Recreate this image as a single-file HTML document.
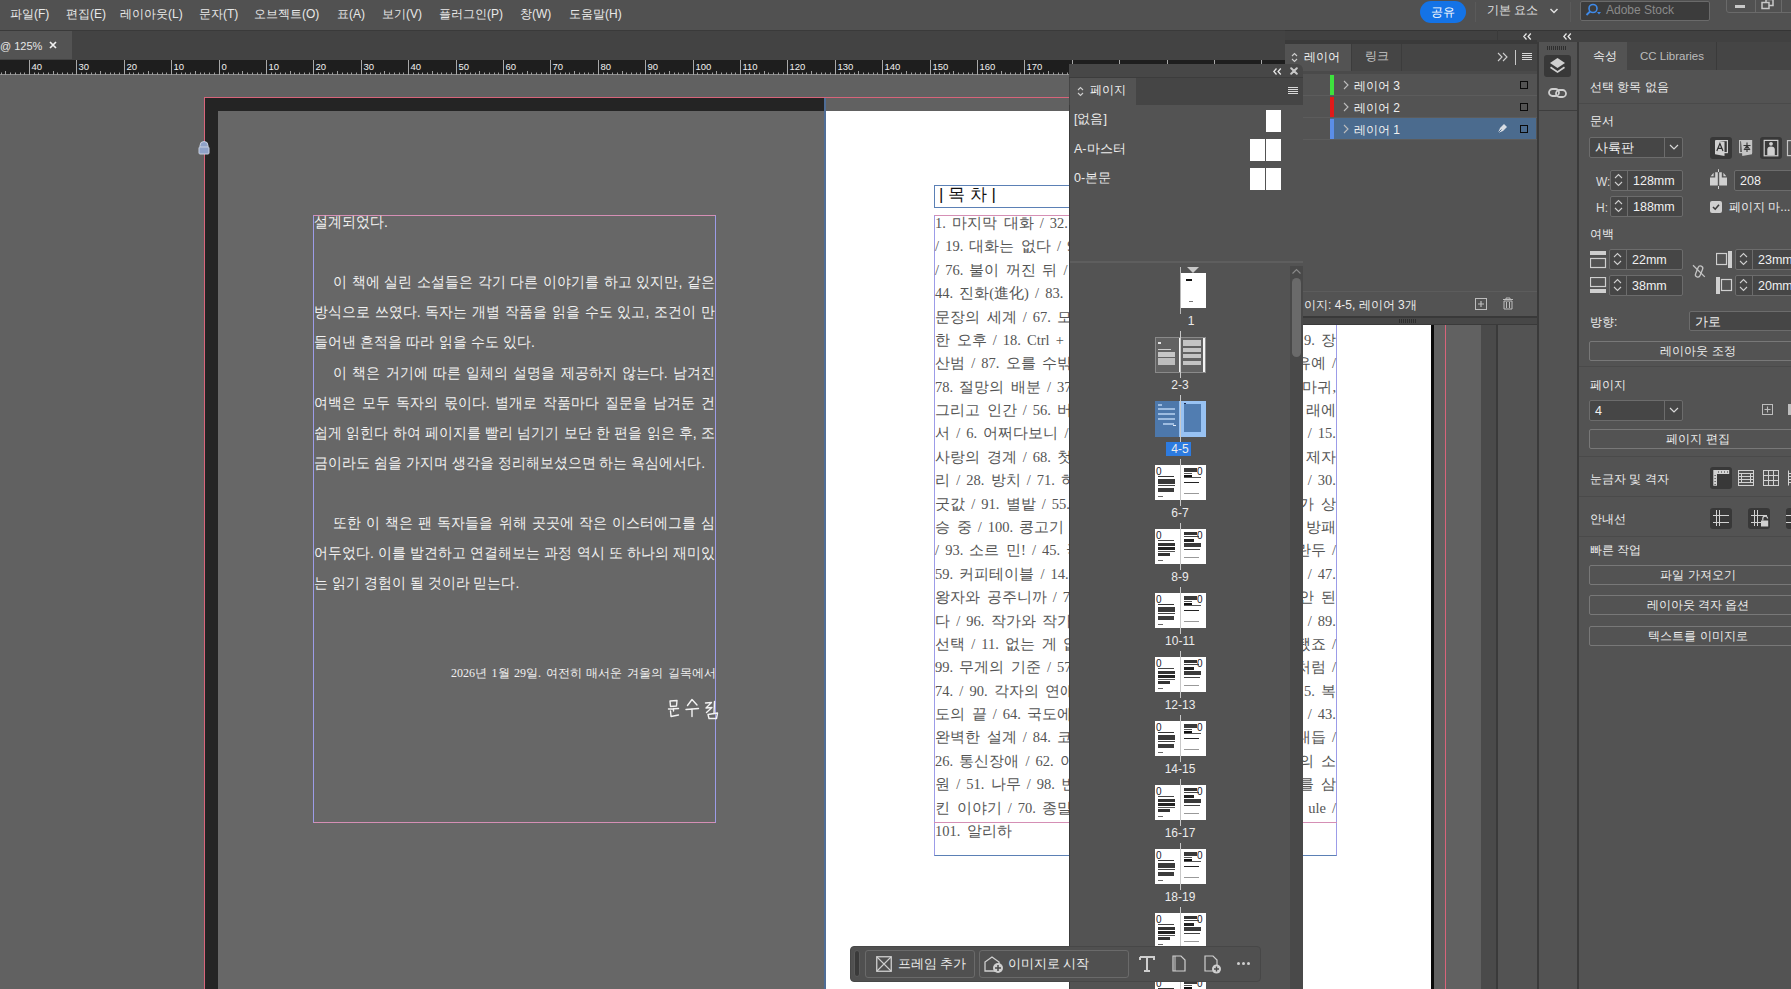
<!DOCTYPE html><html><head><meta charset="utf-8"><style>
html,body{margin:0;padding:0;}
body{width:1791px;height:989px;overflow:hidden;position:relative;background:#535353;font-family:"Liberation Sans", sans-serif;}
div{position:absolute;box-sizing:border-box;}
.t{white-space:nowrap;line-height:1;}
svg{position:absolute;}
.k{font-family:"Liberation Sans", sans-serif;}
</style></head><body>
<div style="left:0px;top:75px;width:1481px;height:914px;background:#616161;"></div>
<div style="left:204px;top:97px;width:1242px;height:900px;border:1px solid #d8647a;border-bottom:none;"></div>
<div style="left:205px;top:98px;width:619px;height:891px;background:#242424;"></div>
<div style="left:218px;top:111px;width:606px;height:878px;background:#676767;"></div>
<div style="left:824px;top:98px;width:2px;height:891px;background:#4f6d96;"></div>
<div style="left:826px;top:111px;width:605px;height:878px;background:#ffffff;"></div>
<div style="left:1431px;top:111px;width:3px;height:878px;background:#0a0a0a;"></div>
<div style="left:1445px;top:97px;width:1px;height:892px;background:#d8647a;"></div>
<div style="left:313px;top:215px;width:403px;height:608px;border-top:1px solid #d58fb5;border-bottom:1px solid #d58fb5;border-left:1px solid #9c9ce8;border-right:1px solid #9c9ce8;"></div>
<div style="left:314px;top:213px;width:70px;height:18px;font-size:14px;color:#f2f2f2;transform:scaleY(1.08);line-height:18px;text-align:justify;text-align-last:justify;white-space:nowrap;overflow:visible;">설계되었다.</div>
<div style="left:333px;top:273px;width:382px;height:18px;font-size:14px;color:#f2f2f2;transform:scaleY(1.08);line-height:18px;text-align:justify;text-align-last:justify;white-space:nowrap;overflow:visible;">이 책에 실린 소설들은 각기 다른 이야기를 하고 있지만, 같은</div>
<div style="left:314px;top:303px;width:401px;height:18px;font-size:14px;color:#f2f2f2;transform:scaleY(1.08);line-height:18px;text-align:justify;text-align-last:justify;white-space:nowrap;overflow:visible;">방식으로 쓰였다. 독자는 개별 작품을 읽을 수도 있고, 조건이 만</div>
<div style="left:314px;top:333px;width:221px;height:18px;font-size:14px;color:#f2f2f2;transform:scaleY(1.08);line-height:18px;text-align:justify;text-align-last:justify;white-space:nowrap;overflow:visible;">들어낸 흔적을 따라 읽을 수도 있다.</div>
<div style="left:333px;top:364px;width:382px;height:18px;font-size:14px;color:#f2f2f2;transform:scaleY(1.08);line-height:18px;text-align:justify;text-align-last:justify;white-space:nowrap;overflow:visible;">이 책은 거기에 따른 일체의 설명을 제공하지 않는다. 남겨진</div>
<div style="left:314px;top:394px;width:401px;height:18px;font-size:14px;color:#f2f2f2;transform:scaleY(1.08);line-height:18px;text-align:justify;text-align-last:justify;white-space:nowrap;overflow:visible;">여백은 모두 독자의 몫이다. 별개로 작품마다 질문을 남겨둔 건</div>
<div style="left:314px;top:424px;width:401px;height:18px;font-size:14px;color:#f2f2f2;transform:scaleY(1.08);line-height:18px;text-align:justify;text-align-last:justify;white-space:nowrap;overflow:visible;">쉽게 읽힌다 하여 페이지를 빨리 넘기기 보단 한 편을 읽은 후, 조</div>
<div style="left:314px;top:454px;width:388px;height:18px;font-size:14px;color:#f2f2f2;transform:scaleY(1.08);line-height:18px;text-align:justify;text-align-last:justify;white-space:nowrap;overflow:visible;">금이라도 쉼을 가지며 생각을 정리해보셨으면 하는 욕심에서다.</div>
<div style="left:333px;top:514px;width:382px;height:18px;font-size:14px;color:#f2f2f2;transform:scaleY(1.08);line-height:18px;text-align:justify;text-align-last:justify;white-space:nowrap;overflow:visible;">또한 이 책은 팬 독자들을 위해 곳곳에 작은 이스터에그를 심</div>
<div style="left:314px;top:544px;width:401px;height:18px;font-size:14px;color:#f2f2f2;transform:scaleY(1.08);line-height:18px;text-align:justify;text-align-last:justify;white-space:nowrap;overflow:visible;">어두었다. 이를 발견하고 연결해보는 과정 역시 또 하나의 재미있</div>
<div style="left:314px;top:574px;width:202px;height:18px;font-size:14px;color:#f2f2f2;transform:scaleY(1.08);line-height:18px;text-align:justify;text-align-last:justify;white-space:nowrap;overflow:visible;">는 읽기 경험이 될 것이라 믿는다.</div>
<div class="t" style="left:451px;top:665px;width:265px;text-align:right;font-family:'Liberation Serif', serif;word-spacing:1.5px;font-size:12px;line-height:16px;color:#f0f0f0;">2026<span class="k">년</span> 1<span class="k">월</span> 29<span class="k">일</span>. <span class="k">여전히 매서운 겨울의 길목에서</span></div>
<svg style="left:660px;top:694px" width="66" height="30" viewBox="660 694 66 30"><g fill="none" stroke="#f2f2f2" stroke-width="1.4" stroke-linecap="round" stroke-linejoin="round"><path d="M670 701 L677 700.5 L676.5 706 L670.5 706.5 Z"/><path d="M668.5 709 L678.5 708.5 M673.5 708.5 V711"/><path d="M670.5 711 L671 716.5 L678.5 715"/><path d="M687.5 705.5 L692 699.5 L697 705"/><path d="M686 709.5 L698.5 708.5 M692 709 V716.5"/><path d="M705.5 703 L711.5 702.5 L706 708 L712 707.5 L706.5 712.5"/><path d="M714.5 701.5 L714 713.5"/><path d="M708 714.5 L717.5 713 L716.5 718.5 L709 718.5 Z"/></g></svg>
<svg style="left:197px;top:141px" width="14" height="14" viewBox="0 0 14 14"><path d="M3 6 V4.5 A4 4 0 0 1 11 4.5 V6" fill="#8fa2c8" stroke="#c8d0e0" stroke-width="1"/><rect x="2" y="6" width="10" height="7" rx="1" fill="#8fa2c8" stroke="#c8d0e0" stroke-width="1"/></svg>
<div style="left:934px;top:185px;width:403px;height:23px;border:1px solid #5b80b5;"></div>
<div class="t" style="left:939px;top:185px;font-size:17px;line-height:20px;color:#111;">| 목 차 |</div>
<div style="left:934px;top:215px;width:403px;height:641px;border-left:1px solid #9c9ce8;border-right:1px solid #9c9ce8;border-top:1px solid #d58fb5;border-bottom:1px solid #5b80b5;"></div>
<div style="left:934px;top:822px;width:403px;height:1px;background:#d58fb5;"></div>
<div class="t" style="left:935px;top:214.0px;font-family:'Liberation Serif', serif;font-size:14.5px;word-spacing:2.5px;color:#555555;line-height:18px;">1. <span class="k">마지막 대화</span> / 32. <span class="k">밤의 무게</span> / 7. <span class="k">그</span></div>
<div class="t" style="left:935px;top:237.4px;font-family:'Liberation Serif', serif;font-size:14.5px;word-spacing:2.5px;color:#555555;line-height:18px;">/ 19. <span class="k">대화는 없다</span> / 9. <span class="k">시간의</span></div>
<div class="t" style="left:935px;top:260.8px;font-family:'Liberation Serif', serif;font-size:14.5px;word-spacing:2.5px;color:#555555;line-height:18px;">/ 76. <span class="k">불이 꺼진 뒤</span> / 24. <span class="k">새벽</span></div>
<div class="t" style="left:935px;top:284.1px;font-family:'Liberation Serif', serif;font-size:14.5px;word-spacing:2.5px;color:#555555;line-height:18px;">44. <span class="k">진화</span>(<span class="k">進化</span>) / 83. <span class="k">잘못된</span></div>
<div class="t" style="left:935px;top:307.5px;font-family:'Liberation Serif', serif;font-size:14.5px;word-spacing:2.5px;color:#555555;line-height:18px;"><span class="k">문장의 세계</span> / 67. <span class="k">모라토리엄</span></div>
<div class="t" style="left:935px;top:330.9px;font-family:'Liberation Serif', serif;font-size:14.5px;word-spacing:2.5px;color:#555555;line-height:18px;"><span class="k">한 오후</span> / 18. Ctrl + Z / 39. <span class="k">장</span></div>
<div class="t" style="left:1136px;top:330.9px;width:200px;text-align:right;font-family:'Liberation Serif', serif;font-size:14.5px;word-spacing:2.5px;color:#555555;line-height:18px;">9. <span class="k">장</span></div>
<div class="t" style="left:935px;top:354.3px;font-family:'Liberation Serif', serif;font-size:14.5px;word-spacing:2.5px;color:#555555;line-height:18px;"><span class="k">산범</span> / 87. <span class="k">오를 수밖에 없는</span></div>
<div class="t" style="left:1136px;top:354.3px;width:200px;text-align:right;font-family:'Liberation Serif', serif;font-size:14.5px;word-spacing:2.5px;color:#555555;line-height:18px;"><span class="k">유예</span> /</div>
<div class="t" style="left:935px;top:377.7px;font-family:'Liberation Serif', serif;font-size:14.5px;word-spacing:2.5px;color:#555555;line-height:18px;">78. <span class="k">절망의 배분</span> / 37. <span class="k">악마귀</span></div>
<div class="t" style="left:1136px;top:377.7px;width:200px;text-align:right;font-family:'Liberation Serif', serif;font-size:14.5px;word-spacing:2.5px;color:#555555;line-height:18px;"><span class="k">마귀</span>,</div>
<div class="t" style="left:935px;top:401.0px;font-family:'Liberation Serif', serif;font-size:14.5px;word-spacing:2.5px;color:#555555;line-height:18px;"><span class="k">그리고 인간</span> / 56. <span class="k">버스 아래에</span></div>
<div class="t" style="left:1136px;top:401.0px;width:200px;text-align:right;font-family:'Liberation Serif', serif;font-size:14.5px;word-spacing:2.5px;color:#555555;line-height:18px;"><span class="k">래에</span></div>
<div class="t" style="left:935px;top:424.4px;font-family:'Liberation Serif', serif;font-size:14.5px;word-spacing:2.5px;color:#555555;line-height:18px;"><span class="k">서</span> / 6. <span class="k">어쩌다보니</span> / 41. 15.</div>
<div class="t" style="left:1136px;top:424.4px;width:200px;text-align:right;font-family:'Liberation Serif', serif;font-size:14.5px;word-spacing:2.5px;color:#555555;line-height:18px;">/ 15.</div>
<div class="t" style="left:935px;top:447.8px;font-family:'Liberation Serif', serif;font-size:14.5px;word-spacing:2.5px;color:#555555;line-height:18px;"><span class="k">사랑의 경계</span> / 68. <span class="k">첫인상 제자</span></div>
<div class="t" style="left:1136px;top:447.8px;width:200px;text-align:right;font-family:'Liberation Serif', serif;font-size:14.5px;word-spacing:2.5px;color:#555555;line-height:18px;"><span class="k">제자</span></div>
<div class="t" style="left:935px;top:471.2px;font-family:'Liberation Serif', serif;font-size:14.5px;word-spacing:2.5px;color:#555555;line-height:18px;"><span class="k">리</span> / 28. <span class="k">방치</span> / 71. <span class="k">허수아비</span> / 30.</div>
<div class="t" style="left:1136px;top:471.2px;width:200px;text-align:right;font-family:'Liberation Serif', serif;font-size:14.5px;word-spacing:2.5px;color:#555555;line-height:18px;">/ 30.</div>
<div class="t" style="left:935px;top:494.6px;font-family:'Liberation Serif', serif;font-size:14.5px;word-spacing:2.5px;color:#555555;line-height:18px;"><span class="k">굿값</span> / 91. <span class="k">별밭</span> / 55. <span class="k">작가 상</span></div>
<div class="t" style="left:1136px;top:494.6px;width:200px;text-align:right;font-family:'Liberation Serif', serif;font-size:14.5px;word-spacing:2.5px;color:#555555;line-height:18px;"><span class="k">가 상</span></div>
<div class="t" style="left:935px;top:517.9px;font-family:'Liberation Serif', serif;font-size:14.5px;word-spacing:2.5px;color:#555555;line-height:18px;"><span class="k">승 중</span> / 100. <span class="k">콩고기</span> / 12. <span class="k">방패</span></div>
<div class="t" style="left:1136px;top:517.9px;width:200px;text-align:right;font-family:'Liberation Serif', serif;font-size:14.5px;word-spacing:2.5px;color:#555555;line-height:18px;"><span class="k">방패</span></div>
<div class="t" style="left:935px;top:541.3px;font-family:'Liberation Serif', serif;font-size:14.5px;word-spacing:2.5px;color:#555555;line-height:18px;">/ 93. <span class="k">소르 민</span>! / 45. <span class="k">국란두</span></div>
<div class="t" style="left:1136px;top:541.3px;width:200px;text-align:right;font-family:'Liberation Serif', serif;font-size:14.5px;word-spacing:2.5px;color:#555555;line-height:18px;"><span class="k">란두</span> /</div>
<div class="t" style="left:935px;top:564.7px;font-family:'Liberation Serif', serif;font-size:14.5px;word-spacing:2.5px;color:#555555;line-height:18px;">59. <span class="k">커피테이블</span> / 14. <span class="k">모래</span> / 47.</div>
<div class="t" style="left:1136px;top:564.7px;width:200px;text-align:right;font-family:'Liberation Serif', serif;font-size:14.5px;word-spacing:2.5px;color:#555555;line-height:18px;">/ 47.</div>
<div class="t" style="left:935px;top:588.1px;font-family:'Liberation Serif', serif;font-size:14.5px;word-spacing:2.5px;color:#555555;line-height:18px;"><span class="k">왕자와 공주니까</span> / 75. <span class="k">안 된</span></div>
<div class="t" style="left:1136px;top:588.1px;width:200px;text-align:right;font-family:'Liberation Serif', serif;font-size:14.5px;word-spacing:2.5px;color:#555555;line-height:18px;"><span class="k">안 된</span></div>
<div class="t" style="left:935px;top:611.5px;font-family:'Liberation Serif', serif;font-size:14.5px;word-spacing:2.5px;color:#555555;line-height:18px;"><span class="k">다</span> / 96. <span class="k">작가와 작가</span> / 89.</div>
<div class="t" style="left:1136px;top:611.5px;width:200px;text-align:right;font-family:'Liberation Serif', serif;font-size:14.5px;word-spacing:2.5px;color:#555555;line-height:18px;">/ 89.</div>
<div class="t" style="left:935px;top:634.8px;font-family:'Liberation Serif', serif;font-size:14.5px;word-spacing:2.5px;color:#555555;line-height:18px;"><span class="k">선택</span> / 11. <span class="k">없는 게 없죠</span></div>
<div class="t" style="left:1136px;top:634.8px;width:200px;text-align:right;font-family:'Liberation Serif', serif;font-size:14.5px;word-spacing:2.5px;color:#555555;line-height:18px;"><span class="k">됐죠</span> /</div>
<div class="t" style="left:935px;top:658.2px;font-family:'Liberation Serif', serif;font-size:14.5px;word-spacing:2.5px;color:#555555;line-height:18px;">99. <span class="k">무게의 기준</span> / 57. <span class="k">처럼</span></div>
<div class="t" style="left:1136px;top:658.2px;width:200px;text-align:right;font-family:'Liberation Serif', serif;font-size:14.5px;word-spacing:2.5px;color:#555555;line-height:18px;"><span class="k">처럼</span> /</div>
<div class="t" style="left:935px;top:681.6px;font-family:'Liberation Serif', serif;font-size:14.5px;word-spacing:2.5px;color:#555555;line-height:18px;">74. / 90. <span class="k">각자의 연애</span> / 35. <span class="k">복</span></div>
<div class="t" style="left:1136px;top:681.6px;width:200px;text-align:right;font-family:'Liberation Serif', serif;font-size:14.5px;word-spacing:2.5px;color:#555555;line-height:18px;">5. <span class="k">복</span></div>
<div class="t" style="left:935px;top:705.0px;font-family:'Liberation Serif', serif;font-size:14.5px;word-spacing:2.5px;color:#555555;line-height:18px;"><span class="k">도의 끝</span> / 64. <span class="k">국도에서</span> / 43.</div>
<div class="t" style="left:1136px;top:705.0px;width:200px;text-align:right;font-family:'Liberation Serif', serif;font-size:14.5px;word-spacing:2.5px;color:#555555;line-height:18px;">/ 43.</div>
<div class="t" style="left:935px;top:728.4px;font-family:'Liberation Serif', serif;font-size:14.5px;word-spacing:2.5px;color:#555555;line-height:18px;"><span class="k">완벽한 설계</span> / 84. <span class="k">코로나 매듭</span></div>
<div class="t" style="left:1136px;top:728.4px;width:200px;text-align:right;font-family:'Liberation Serif', serif;font-size:14.5px;word-spacing:2.5px;color:#555555;line-height:18px;"><span class="k">대듭</span> /</div>
<div class="t" style="left:935px;top:751.7px;font-family:'Liberation Serif', serif;font-size:14.5px;word-spacing:2.5px;color:#555555;line-height:18px;">26. <span class="k">통신장애</span> / 62. <span class="k">아이의 소</span></div>
<div class="t" style="left:1136px;top:751.7px;width:200px;text-align:right;font-family:'Liberation Serif', serif;font-size:14.5px;word-spacing:2.5px;color:#555555;line-height:18px;"><span class="k">의 소</span></div>
<div class="t" style="left:935px;top:775.1px;font-family:'Liberation Serif', serif;font-size:14.5px;word-spacing:2.5px;color:#555555;line-height:18px;"><span class="k">원</span> / 51. <span class="k">나무</span> / 98. <span class="k">변명를 삼</span></div>
<div class="t" style="left:1136px;top:775.1px;width:200px;text-align:right;font-family:'Liberation Serif', serif;font-size:14.5px;word-spacing:2.5px;color:#555555;line-height:18px;"><span class="k">를 삼</span></div>
<div class="t" style="left:935px;top:798.5px;font-family:'Liberation Serif', serif;font-size:14.5px;word-spacing:2.5px;color:#555555;line-height:18px;"><span class="k">킨 이야기</span> / 70. <span class="k">종말의</span> Capsule</div>
<div class="t" style="left:1136px;top:798.5px;width:200px;text-align:right;font-family:'Liberation Serif', serif;font-size:14.5px;word-spacing:2.5px;color:#555555;line-height:18px;">ule /</div>
<div class="t" style="left:935px;top:821.9px;font-family:'Liberation Serif', serif;font-size:14.5px;word-spacing:2.5px;color:#555555;line-height:18px;">101. <span class="k">알리하</span></div>
<div style="left:1481px;top:75px;width:16px;height:914px;background:#4a4a4a;"></div>
<div style="left:1496px;top:75px;width:2px;height:914px;background:#3a3a3a;"></div>
<div style="left:1498px;top:75px;width:39px;height:914px;background:#535353;"></div>
<div style="left:0px;top:0px;width:1791px;height:30px;background:#515151;"></div>
<div class="t" style="left:10px;top:6px;font-size:12px;line-height:16px;color:#e8e8e8;">파일(F)</div>
<div class="t" style="left:66px;top:6px;font-size:12px;line-height:16px;color:#e8e8e8;">편집(E)</div>
<div class="t" style="left:120px;top:6px;font-size:12px;line-height:16px;color:#e8e8e8;">레이아웃(L)</div>
<div class="t" style="left:199px;top:6px;font-size:12px;line-height:16px;color:#e8e8e8;">문자(T)</div>
<div class="t" style="left:254px;top:6px;font-size:12px;line-height:16px;color:#e8e8e8;">오브젝트(O)</div>
<div class="t" style="left:337px;top:6px;font-size:12px;line-height:16px;color:#e8e8e8;">표(A)</div>
<div class="t" style="left:382px;top:6px;font-size:12px;line-height:16px;color:#e8e8e8;">보기(V)</div>
<div class="t" style="left:439px;top:6px;font-size:12px;line-height:16px;color:#e8e8e8;">플러그인(P)</div>
<div class="t" style="left:520px;top:6px;font-size:12px;line-height:16px;color:#e8e8e8;">창(W)</div>
<div class="t" style="left:569px;top:6px;font-size:12px;line-height:16px;color:#e8e8e8;">도움말(H)</div>
<div style="left:1420px;top:1px;width:46px;height:22px;background:#1473e6;border-radius:11px;"></div>
<div class="t" style="left:1431px;top:5px;font-size:12px;line-height:14px;color:#fff;">공유</div>
<div style="left:1475px;top:2px;width:1px;height:20px;background:#5a5a5a;"></div>
<div class="t" style="left:1487px;top:3px;font-size:12px;line-height:14px;color:#e0e0e0;">기본 요소</div>
<svg style="left:1549px;top:7px" width="10" height="8" viewBox="0 0 10 8"><path d="M1.5 2 L5 5.5 L8.5 2" fill="none" stroke="#e0e0e0" stroke-width="1.5"/></svg>
<div style="left:1570px;top:2px;width:1px;height:20px;background:#5a5a5a;"></div>
<div style="left:1580px;top:1px;width:130px;height:20px;background:#3c3c3c;border:1px solid #6a6a6a;border-radius:2px;"></div>
<svg style="left:1585px;top:3px" width="18" height="15" viewBox="0 0 18 15"><circle cx="8" cy="5.5" r="4" fill="none" stroke="#3f8ae8" stroke-width="1.6"/><path d="M5 8.5 L1.5 12" stroke="#3f8ae8" stroke-width="1.8"/><path d="M12 9 L16 9 L14 11.5 Z" fill="#3f8ae8"/></svg>
<div class="t" style="left:1606px;top:4px;font-size:12px;line-height:13px;color:#8a8a8a;">Adobe Stock</div>
<div style="left:1726px;top:-2px;width:70px;height:15px;border:1px solid #6a6a6a;border-radius:0 0 0 3px;"></div>
<div style="left:1755px;top:-2px;width:1px;height:14px;background:#6a6a6a;"></div>
<div style="left:1781px;top:-2px;width:1px;height:14px;background:#6a6a6a;"></div>
<div style="left:1735px;top:5px;width:10px;height:3px;background:#c8c8c8;"></div>
<svg style="left:1761px;top:-1px" width="15" height="11" viewBox="0 0 15 11"><rect x="5" y="0.5" width="7" height="6" fill="none" stroke="#c8c8c8" stroke-width="1.5"/><rect x="1" y="3.5" width="7" height="6" fill="#535353" stroke="#c8c8c8" stroke-width="1.5"/></svg>
<div style="left:0px;top:30px;width:1791px;height:30px;background:#434343;border-top:1px solid #3a3a3a;"></div>
<div style="left:0px;top:31px;width:72px;height:28px;background:#535353;"></div>
<div class="t" style="left:0px;top:39px;font-size:11px;line-height:14px;color:#e6e6e6;">@ 125%</div>
<svg style="left:49px;top:41px" width="8" height="8" viewBox="0 0 8 8"><path d="M1 1 L7 7 M7 1 L1 7" stroke="#f0f0f0" stroke-width="1.7"/></svg>
<svg style="left:0;top:60px" width="1285" height="15" viewBox="0 0 1285 15"><rect x="0" y="0" width="1285" height="15" fill="#1e1e1e"/><rect x="0" y="14" width="1285" height="1" fill="#8c8c8c"/><line x1="1.5" y1="12.5" x2="1.5" y2="15" stroke="#a0a0a0" stroke-width="1"/><line x1="5.5" y1="11" x2="5.5" y2="15" stroke="#a0a0a0" stroke-width="1"/><line x1="10.5" y1="12.5" x2="10.5" y2="15" stroke="#a0a0a0" stroke-width="1"/><line x1="15.5" y1="12.5" x2="15.5" y2="15" stroke="#a0a0a0" stroke-width="1"/><line x1="20.5" y1="12.5" x2="20.5" y2="15" stroke="#a0a0a0" stroke-width="1"/><line x1="24.5" y1="12.5" x2="24.5" y2="15" stroke="#a0a0a0" stroke-width="1"/><line x1="29.5" y1="0" x2="29.5" y2="15" stroke="#a8a8a8" stroke-width="1"/><text x="31.5" y="10" font-family="Liberation Sans" font-size="9.5" fill="#f0f0f0">40</text><line x1="34.5" y1="12.5" x2="34.5" y2="15" stroke="#a0a0a0" stroke-width="1"/><line x1="38.5" y1="12.5" x2="38.5" y2="15" stroke="#a0a0a0" stroke-width="1"/><line x1="43.5" y1="12.5" x2="43.5" y2="15" stroke="#a0a0a0" stroke-width="1"/><line x1="48.5" y1="12.5" x2="48.5" y2="15" stroke="#a0a0a0" stroke-width="1"/><line x1="53.5" y1="11" x2="53.5" y2="15" stroke="#a0a0a0" stroke-width="1"/><line x1="57.5" y1="12.5" x2="57.5" y2="15" stroke="#a0a0a0" stroke-width="1"/><line x1="62.5" y1="12.5" x2="62.5" y2="15" stroke="#a0a0a0" stroke-width="1"/><line x1="67.5" y1="12.5" x2="67.5" y2="15" stroke="#a0a0a0" stroke-width="1"/><line x1="72.5" y1="12.5" x2="72.5" y2="15" stroke="#a0a0a0" stroke-width="1"/><line x1="76.5" y1="0" x2="76.5" y2="15" stroke="#a8a8a8" stroke-width="1"/><text x="78.5" y="10" font-family="Liberation Sans" font-size="9.5" fill="#f0f0f0">30</text><line x1="81.5" y1="12.5" x2="81.5" y2="15" stroke="#a0a0a0" stroke-width="1"/><line x1="86.5" y1="12.5" x2="86.5" y2="15" stroke="#a0a0a0" stroke-width="1"/><line x1="91.5" y1="12.5" x2="91.5" y2="15" stroke="#a0a0a0" stroke-width="1"/><line x1="95.5" y1="12.5" x2="95.5" y2="15" stroke="#a0a0a0" stroke-width="1"/><line x1="100.5" y1="11" x2="100.5" y2="15" stroke="#a0a0a0" stroke-width="1"/><line x1="105.5" y1="12.5" x2="105.5" y2="15" stroke="#a0a0a0" stroke-width="1"/><line x1="110.5" y1="12.5" x2="110.5" y2="15" stroke="#a0a0a0" stroke-width="1"/><line x1="114.5" y1="12.5" x2="114.5" y2="15" stroke="#a0a0a0" stroke-width="1"/><line x1="119.5" y1="12.5" x2="119.5" y2="15" stroke="#a0a0a0" stroke-width="1"/><line x1="124.5" y1="0" x2="124.5" y2="15" stroke="#a8a8a8" stroke-width="1"/><text x="126.5" y="10" font-family="Liberation Sans" font-size="9.5" fill="#f0f0f0">20</text><line x1="129.5" y1="12.5" x2="129.5" y2="15" stroke="#a0a0a0" stroke-width="1"/><line x1="133.5" y1="12.5" x2="133.5" y2="15" stroke="#a0a0a0" stroke-width="1"/><line x1="138.5" y1="12.5" x2="138.5" y2="15" stroke="#a0a0a0" stroke-width="1"/><line x1="143.5" y1="12.5" x2="143.5" y2="15" stroke="#a0a0a0" stroke-width="1"/><line x1="148.5" y1="11" x2="148.5" y2="15" stroke="#a0a0a0" stroke-width="1"/><line x1="152.5" y1="12.5" x2="152.5" y2="15" stroke="#a0a0a0" stroke-width="1"/><line x1="157.5" y1="12.5" x2="157.5" y2="15" stroke="#a0a0a0" stroke-width="1"/><line x1="162.5" y1="12.5" x2="162.5" y2="15" stroke="#a0a0a0" stroke-width="1"/><line x1="166.5" y1="12.5" x2="166.5" y2="15" stroke="#a0a0a0" stroke-width="1"/><line x1="171.5" y1="0" x2="171.5" y2="15" stroke="#a8a8a8" stroke-width="1"/><text x="173.5" y="10" font-family="Liberation Sans" font-size="9.5" fill="#f0f0f0">10</text><line x1="176.5" y1="12.5" x2="176.5" y2="15" stroke="#a0a0a0" stroke-width="1"/><line x1="181.5" y1="12.5" x2="181.5" y2="15" stroke="#a0a0a0" stroke-width="1"/><line x1="185.5" y1="12.5" x2="185.5" y2="15" stroke="#a0a0a0" stroke-width="1"/><line x1="190.5" y1="12.5" x2="190.5" y2="15" stroke="#a0a0a0" stroke-width="1"/><line x1="195.5" y1="11" x2="195.5" y2="15" stroke="#a0a0a0" stroke-width="1"/><line x1="200.5" y1="12.5" x2="200.5" y2="15" stroke="#a0a0a0" stroke-width="1"/><line x1="204.5" y1="12.5" x2="204.5" y2="15" stroke="#a0a0a0" stroke-width="1"/><line x1="209.5" y1="12.5" x2="209.5" y2="15" stroke="#a0a0a0" stroke-width="1"/><line x1="214.5" y1="12.5" x2="214.5" y2="15" stroke="#a0a0a0" stroke-width="1"/><line x1="219.5" y1="0" x2="219.5" y2="15" stroke="#a8a8a8" stroke-width="1"/><text x="221.5" y="10" font-family="Liberation Sans" font-size="9.5" fill="#f0f0f0">0</text><line x1="223.5" y1="12.5" x2="223.5" y2="15" stroke="#a0a0a0" stroke-width="1"/><line x1="228.5" y1="12.5" x2="228.5" y2="15" stroke="#a0a0a0" stroke-width="1"/><line x1="233.5" y1="12.5" x2="233.5" y2="15" stroke="#a0a0a0" stroke-width="1"/><line x1="238.5" y1="12.5" x2="238.5" y2="15" stroke="#a0a0a0" stroke-width="1"/><line x1="242.5" y1="11" x2="242.5" y2="15" stroke="#a0a0a0" stroke-width="1"/><line x1="247.5" y1="12.5" x2="247.5" y2="15" stroke="#a0a0a0" stroke-width="1"/><line x1="252.5" y1="12.5" x2="252.5" y2="15" stroke="#a0a0a0" stroke-width="1"/><line x1="257.5" y1="12.5" x2="257.5" y2="15" stroke="#a0a0a0" stroke-width="1"/><line x1="261.5" y1="12.5" x2="261.5" y2="15" stroke="#a0a0a0" stroke-width="1"/><line x1="266.5" y1="0" x2="266.5" y2="15" stroke="#a8a8a8" stroke-width="1"/><text x="268.5" y="10" font-family="Liberation Sans" font-size="9.5" fill="#f0f0f0">10</text><line x1="271.5" y1="12.5" x2="271.5" y2="15" stroke="#a0a0a0" stroke-width="1"/><line x1="275.5" y1="12.5" x2="275.5" y2="15" stroke="#a0a0a0" stroke-width="1"/><line x1="280.5" y1="12.5" x2="280.5" y2="15" stroke="#a0a0a0" stroke-width="1"/><line x1="285.5" y1="12.5" x2="285.5" y2="15" stroke="#a0a0a0" stroke-width="1"/><line x1="290.5" y1="11" x2="290.5" y2="15" stroke="#a0a0a0" stroke-width="1"/><line x1="294.5" y1="12.5" x2="294.5" y2="15" stroke="#a0a0a0" stroke-width="1"/><line x1="299.5" y1="12.5" x2="299.5" y2="15" stroke="#a0a0a0" stroke-width="1"/><line x1="304.5" y1="12.5" x2="304.5" y2="15" stroke="#a0a0a0" stroke-width="1"/><line x1="309.5" y1="12.5" x2="309.5" y2="15" stroke="#a0a0a0" stroke-width="1"/><line x1="313.5" y1="0" x2="313.5" y2="15" stroke="#a8a8a8" stroke-width="1"/><text x="315.5" y="10" font-family="Liberation Sans" font-size="9.5" fill="#f0f0f0">20</text><line x1="318.5" y1="12.5" x2="318.5" y2="15" stroke="#a0a0a0" stroke-width="1"/><line x1="323.5" y1="12.5" x2="323.5" y2="15" stroke="#a0a0a0" stroke-width="1"/><line x1="328.5" y1="12.5" x2="328.5" y2="15" stroke="#a0a0a0" stroke-width="1"/><line x1="332.5" y1="12.5" x2="332.5" y2="15" stroke="#a0a0a0" stroke-width="1"/><line x1="337.5" y1="11" x2="337.5" y2="15" stroke="#a0a0a0" stroke-width="1"/><line x1="342.5" y1="12.5" x2="342.5" y2="15" stroke="#a0a0a0" stroke-width="1"/><line x1="347.5" y1="12.5" x2="347.5" y2="15" stroke="#a0a0a0" stroke-width="1"/><line x1="351.5" y1="12.5" x2="351.5" y2="15" stroke="#a0a0a0" stroke-width="1"/><line x1="356.5" y1="12.5" x2="356.5" y2="15" stroke="#a0a0a0" stroke-width="1"/><line x1="361.5" y1="0" x2="361.5" y2="15" stroke="#a8a8a8" stroke-width="1"/><text x="363.5" y="10" font-family="Liberation Sans" font-size="9.5" fill="#f0f0f0">30</text><line x1="366.5" y1="12.5" x2="366.5" y2="15" stroke="#a0a0a0" stroke-width="1"/><line x1="370.5" y1="12.5" x2="370.5" y2="15" stroke="#a0a0a0" stroke-width="1"/><line x1="375.5" y1="12.5" x2="375.5" y2="15" stroke="#a0a0a0" stroke-width="1"/><line x1="380.5" y1="12.5" x2="380.5" y2="15" stroke="#a0a0a0" stroke-width="1"/><line x1="384.5" y1="11" x2="384.5" y2="15" stroke="#a0a0a0" stroke-width="1"/><line x1="389.5" y1="12.5" x2="389.5" y2="15" stroke="#a0a0a0" stroke-width="1"/><line x1="394.5" y1="12.5" x2="394.5" y2="15" stroke="#a0a0a0" stroke-width="1"/><line x1="399.5" y1="12.5" x2="399.5" y2="15" stroke="#a0a0a0" stroke-width="1"/><line x1="403.5" y1="12.5" x2="403.5" y2="15" stroke="#a0a0a0" stroke-width="1"/><line x1="408.5" y1="0" x2="408.5" y2="15" stroke="#a8a8a8" stroke-width="1"/><text x="410.5" y="10" font-family="Liberation Sans" font-size="9.5" fill="#f0f0f0">40</text><line x1="413.5" y1="12.5" x2="413.5" y2="15" stroke="#a0a0a0" stroke-width="1"/><line x1="418.5" y1="12.5" x2="418.5" y2="15" stroke="#a0a0a0" stroke-width="1"/><line x1="422.5" y1="12.5" x2="422.5" y2="15" stroke="#a0a0a0" stroke-width="1"/><line x1="427.5" y1="12.5" x2="427.5" y2="15" stroke="#a0a0a0" stroke-width="1"/><line x1="432.5" y1="11" x2="432.5" y2="15" stroke="#a0a0a0" stroke-width="1"/><line x1="437.5" y1="12.5" x2="437.5" y2="15" stroke="#a0a0a0" stroke-width="1"/><line x1="441.5" y1="12.5" x2="441.5" y2="15" stroke="#a0a0a0" stroke-width="1"/><line x1="446.5" y1="12.5" x2="446.5" y2="15" stroke="#a0a0a0" stroke-width="1"/><line x1="451.5" y1="12.5" x2="451.5" y2="15" stroke="#a0a0a0" stroke-width="1"/><line x1="456.5" y1="0" x2="456.5" y2="15" stroke="#a8a8a8" stroke-width="1"/><text x="458.5" y="10" font-family="Liberation Sans" font-size="9.5" fill="#f0f0f0">50</text><line x1="460.5" y1="12.5" x2="460.5" y2="15" stroke="#a0a0a0" stroke-width="1"/><line x1="465.5" y1="12.5" x2="465.5" y2="15" stroke="#a0a0a0" stroke-width="1"/><line x1="470.5" y1="12.5" x2="470.5" y2="15" stroke="#a0a0a0" stroke-width="1"/><line x1="475.5" y1="12.5" x2="475.5" y2="15" stroke="#a0a0a0" stroke-width="1"/><line x1="479.5" y1="11" x2="479.5" y2="15" stroke="#a0a0a0" stroke-width="1"/><line x1="484.5" y1="12.5" x2="484.5" y2="15" stroke="#a0a0a0" stroke-width="1"/><line x1="489.5" y1="12.5" x2="489.5" y2="15" stroke="#a0a0a0" stroke-width="1"/><line x1="494.5" y1="12.5" x2="494.5" y2="15" stroke="#a0a0a0" stroke-width="1"/><line x1="498.5" y1="12.5" x2="498.5" y2="15" stroke="#a0a0a0" stroke-width="1"/><line x1="503.5" y1="0" x2="503.5" y2="15" stroke="#a8a8a8" stroke-width="1"/><text x="505.5" y="10" font-family="Liberation Sans" font-size="9.5" fill="#f0f0f0">60</text><line x1="508.5" y1="12.5" x2="508.5" y2="15" stroke="#a0a0a0" stroke-width="1"/><line x1="512.5" y1="12.5" x2="512.5" y2="15" stroke="#a0a0a0" stroke-width="1"/><line x1="517.5" y1="12.5" x2="517.5" y2="15" stroke="#a0a0a0" stroke-width="1"/><line x1="522.5" y1="12.5" x2="522.5" y2="15" stroke="#a0a0a0" stroke-width="1"/><line x1="527.5" y1="11" x2="527.5" y2="15" stroke="#a0a0a0" stroke-width="1"/><line x1="531.5" y1="12.5" x2="531.5" y2="15" stroke="#a0a0a0" stroke-width="1"/><line x1="536.5" y1="12.5" x2="536.5" y2="15" stroke="#a0a0a0" stroke-width="1"/><line x1="541.5" y1="12.5" x2="541.5" y2="15" stroke="#a0a0a0" stroke-width="1"/><line x1="546.5" y1="12.5" x2="546.5" y2="15" stroke="#a0a0a0" stroke-width="1"/><line x1="550.5" y1="0" x2="550.5" y2="15" stroke="#a8a8a8" stroke-width="1"/><text x="552.5" y="10" font-family="Liberation Sans" font-size="9.5" fill="#f0f0f0">70</text><line x1="555.5" y1="12.5" x2="555.5" y2="15" stroke="#a0a0a0" stroke-width="1"/><line x1="560.5" y1="12.5" x2="560.5" y2="15" stroke="#a0a0a0" stroke-width="1"/><line x1="565.5" y1="12.5" x2="565.5" y2="15" stroke="#a0a0a0" stroke-width="1"/><line x1="569.5" y1="12.5" x2="569.5" y2="15" stroke="#a0a0a0" stroke-width="1"/><line x1="574.5" y1="11" x2="574.5" y2="15" stroke="#a0a0a0" stroke-width="1"/><line x1="579.5" y1="12.5" x2="579.5" y2="15" stroke="#a0a0a0" stroke-width="1"/><line x1="584.5" y1="12.5" x2="584.5" y2="15" stroke="#a0a0a0" stroke-width="1"/><line x1="588.5" y1="12.5" x2="588.5" y2="15" stroke="#a0a0a0" stroke-width="1"/><line x1="593.5" y1="12.5" x2="593.5" y2="15" stroke="#a0a0a0" stroke-width="1"/><line x1="598.5" y1="0" x2="598.5" y2="15" stroke="#a8a8a8" stroke-width="1"/><text x="600.5" y="10" font-family="Liberation Sans" font-size="9.5" fill="#f0f0f0">80</text><line x1="603.5" y1="12.5" x2="603.5" y2="15" stroke="#a0a0a0" stroke-width="1"/><line x1="607.5" y1="12.5" x2="607.5" y2="15" stroke="#a0a0a0" stroke-width="1"/><line x1="612.5" y1="12.5" x2="612.5" y2="15" stroke="#a0a0a0" stroke-width="1"/><line x1="617.5" y1="12.5" x2="617.5" y2="15" stroke="#a0a0a0" stroke-width="1"/><line x1="622.5" y1="11" x2="622.5" y2="15" stroke="#a0a0a0" stroke-width="1"/><line x1="626.5" y1="12.5" x2="626.5" y2="15" stroke="#a0a0a0" stroke-width="1"/><line x1="631.5" y1="12.5" x2="631.5" y2="15" stroke="#a0a0a0" stroke-width="1"/><line x1="636.5" y1="12.5" x2="636.5" y2="15" stroke="#a0a0a0" stroke-width="1"/><line x1="640.5" y1="12.5" x2="640.5" y2="15" stroke="#a0a0a0" stroke-width="1"/><line x1="645.5" y1="0" x2="645.5" y2="15" stroke="#a8a8a8" stroke-width="1"/><text x="647.5" y="10" font-family="Liberation Sans" font-size="9.5" fill="#f0f0f0">90</text><line x1="650.5" y1="12.5" x2="650.5" y2="15" stroke="#a0a0a0" stroke-width="1"/><line x1="655.5" y1="12.5" x2="655.5" y2="15" stroke="#a0a0a0" stroke-width="1"/><line x1="659.5" y1="12.5" x2="659.5" y2="15" stroke="#a0a0a0" stroke-width="1"/><line x1="664.5" y1="12.5" x2="664.5" y2="15" stroke="#a0a0a0" stroke-width="1"/><line x1="669.5" y1="11" x2="669.5" y2="15" stroke="#a0a0a0" stroke-width="1"/><line x1="674.5" y1="12.5" x2="674.5" y2="15" stroke="#a0a0a0" stroke-width="1"/><line x1="678.5" y1="12.5" x2="678.5" y2="15" stroke="#a0a0a0" stroke-width="1"/><line x1="683.5" y1="12.5" x2="683.5" y2="15" stroke="#a0a0a0" stroke-width="1"/><line x1="688.5" y1="12.5" x2="688.5" y2="15" stroke="#a0a0a0" stroke-width="1"/><line x1="693.5" y1="0" x2="693.5" y2="15" stroke="#a8a8a8" stroke-width="1"/><text x="695.5" y="10" font-family="Liberation Sans" font-size="9.5" fill="#f0f0f0">100</text><line x1="697.5" y1="12.5" x2="697.5" y2="15" stroke="#a0a0a0" stroke-width="1"/><line x1="702.5" y1="12.5" x2="702.5" y2="15" stroke="#a0a0a0" stroke-width="1"/><line x1="707.5" y1="12.5" x2="707.5" y2="15" stroke="#a0a0a0" stroke-width="1"/><line x1="712.5" y1="12.5" x2="712.5" y2="15" stroke="#a0a0a0" stroke-width="1"/><line x1="716.5" y1="11" x2="716.5" y2="15" stroke="#a0a0a0" stroke-width="1"/><line x1="721.5" y1="12.5" x2="721.5" y2="15" stroke="#a0a0a0" stroke-width="1"/><line x1="726.5" y1="12.5" x2="726.5" y2="15" stroke="#a0a0a0" stroke-width="1"/><line x1="731.5" y1="12.5" x2="731.5" y2="15" stroke="#a0a0a0" stroke-width="1"/><line x1="735.5" y1="12.5" x2="735.5" y2="15" stroke="#a0a0a0" stroke-width="1"/><line x1="740.5" y1="0" x2="740.5" y2="15" stroke="#a8a8a8" stroke-width="1"/><text x="742.5" y="10" font-family="Liberation Sans" font-size="9.5" fill="#f0f0f0">110</text><line x1="745.5" y1="12.5" x2="745.5" y2="15" stroke="#a0a0a0" stroke-width="1"/><line x1="749.5" y1="12.5" x2="749.5" y2="15" stroke="#a0a0a0" stroke-width="1"/><line x1="754.5" y1="12.5" x2="754.5" y2="15" stroke="#a0a0a0" stroke-width="1"/><line x1="759.5" y1="12.5" x2="759.5" y2="15" stroke="#a0a0a0" stroke-width="1"/><line x1="764.5" y1="11" x2="764.5" y2="15" stroke="#a0a0a0" stroke-width="1"/><line x1="768.5" y1="12.5" x2="768.5" y2="15" stroke="#a0a0a0" stroke-width="1"/><line x1="773.5" y1="12.5" x2="773.5" y2="15" stroke="#a0a0a0" stroke-width="1"/><line x1="778.5" y1="12.5" x2="778.5" y2="15" stroke="#a0a0a0" stroke-width="1"/><line x1="783.5" y1="12.5" x2="783.5" y2="15" stroke="#a0a0a0" stroke-width="1"/><line x1="787.5" y1="0" x2="787.5" y2="15" stroke="#a8a8a8" stroke-width="1"/><text x="789.5" y="10" font-family="Liberation Sans" font-size="9.5" fill="#f0f0f0">120</text><line x1="792.5" y1="12.5" x2="792.5" y2="15" stroke="#a0a0a0" stroke-width="1"/><line x1="797.5" y1="12.5" x2="797.5" y2="15" stroke="#a0a0a0" stroke-width="1"/><line x1="802.5" y1="12.5" x2="802.5" y2="15" stroke="#a0a0a0" stroke-width="1"/><line x1="806.5" y1="12.5" x2="806.5" y2="15" stroke="#a0a0a0" stroke-width="1"/><line x1="811.5" y1="11" x2="811.5" y2="15" stroke="#a0a0a0" stroke-width="1"/><line x1="816.5" y1="12.5" x2="816.5" y2="15" stroke="#a0a0a0" stroke-width="1"/><line x1="821.5" y1="12.5" x2="821.5" y2="15" stroke="#a0a0a0" stroke-width="1"/><line x1="825.5" y1="12.5" x2="825.5" y2="15" stroke="#a0a0a0" stroke-width="1"/><line x1="830.5" y1="12.5" x2="830.5" y2="15" stroke="#a0a0a0" stroke-width="1"/><line x1="835.5" y1="0" x2="835.5" y2="15" stroke="#a8a8a8" stroke-width="1"/><text x="837.5" y="10" font-family="Liberation Sans" font-size="9.5" fill="#f0f0f0">130</text><line x1="840.5" y1="12.5" x2="840.5" y2="15" stroke="#a0a0a0" stroke-width="1"/><line x1="844.5" y1="12.5" x2="844.5" y2="15" stroke="#a0a0a0" stroke-width="1"/><line x1="849.5" y1="12.5" x2="849.5" y2="15" stroke="#a0a0a0" stroke-width="1"/><line x1="854.5" y1="12.5" x2="854.5" y2="15" stroke="#a0a0a0" stroke-width="1"/><line x1="858.5" y1="11" x2="858.5" y2="15" stroke="#a0a0a0" stroke-width="1"/><line x1="863.5" y1="12.5" x2="863.5" y2="15" stroke="#a0a0a0" stroke-width="1"/><line x1="868.5" y1="12.5" x2="868.5" y2="15" stroke="#a0a0a0" stroke-width="1"/><line x1="873.5" y1="12.5" x2="873.5" y2="15" stroke="#a0a0a0" stroke-width="1"/><line x1="877.5" y1="12.5" x2="877.5" y2="15" stroke="#a0a0a0" stroke-width="1"/><line x1="882.5" y1="0" x2="882.5" y2="15" stroke="#a8a8a8" stroke-width="1"/><text x="884.5" y="10" font-family="Liberation Sans" font-size="9.5" fill="#f0f0f0">140</text><line x1="887.5" y1="12.5" x2="887.5" y2="15" stroke="#a0a0a0" stroke-width="1"/><line x1="892.5" y1="12.5" x2="892.5" y2="15" stroke="#a0a0a0" stroke-width="1"/><line x1="896.5" y1="12.5" x2="896.5" y2="15" stroke="#a0a0a0" stroke-width="1"/><line x1="901.5" y1="12.5" x2="901.5" y2="15" stroke="#a0a0a0" stroke-width="1"/><line x1="906.5" y1="11" x2="906.5" y2="15" stroke="#a0a0a0" stroke-width="1"/><line x1="911.5" y1="12.5" x2="911.5" y2="15" stroke="#a0a0a0" stroke-width="1"/><line x1="915.5" y1="12.5" x2="915.5" y2="15" stroke="#a0a0a0" stroke-width="1"/><line x1="920.5" y1="12.5" x2="920.5" y2="15" stroke="#a0a0a0" stroke-width="1"/><line x1="925.5" y1="12.5" x2="925.5" y2="15" stroke="#a0a0a0" stroke-width="1"/><line x1="930.5" y1="0" x2="930.5" y2="15" stroke="#a8a8a8" stroke-width="1"/><text x="932.5" y="10" font-family="Liberation Sans" font-size="9.5" fill="#f0f0f0">150</text><line x1="934.5" y1="12.5" x2="934.5" y2="15" stroke="#a0a0a0" stroke-width="1"/><line x1="939.5" y1="12.5" x2="939.5" y2="15" stroke="#a0a0a0" stroke-width="1"/><line x1="944.5" y1="12.5" x2="944.5" y2="15" stroke="#a0a0a0" stroke-width="1"/><line x1="949.5" y1="12.5" x2="949.5" y2="15" stroke="#a0a0a0" stroke-width="1"/><line x1="953.5" y1="11" x2="953.5" y2="15" stroke="#a0a0a0" stroke-width="1"/><line x1="958.5" y1="12.5" x2="958.5" y2="15" stroke="#a0a0a0" stroke-width="1"/><line x1="963.5" y1="12.5" x2="963.5" y2="15" stroke="#a0a0a0" stroke-width="1"/><line x1="968.5" y1="12.5" x2="968.5" y2="15" stroke="#a0a0a0" stroke-width="1"/><line x1="972.5" y1="12.5" x2="972.5" y2="15" stroke="#a0a0a0" stroke-width="1"/><line x1="977.5" y1="0" x2="977.5" y2="15" stroke="#a8a8a8" stroke-width="1"/><text x="979.5" y="10" font-family="Liberation Sans" font-size="9.5" fill="#f0f0f0">160</text><line x1="982.5" y1="12.5" x2="982.5" y2="15" stroke="#a0a0a0" stroke-width="1"/><line x1="986.5" y1="12.5" x2="986.5" y2="15" stroke="#a0a0a0" stroke-width="1"/><line x1="991.5" y1="12.5" x2="991.5" y2="15" stroke="#a0a0a0" stroke-width="1"/><line x1="996.5" y1="12.5" x2="996.5" y2="15" stroke="#a0a0a0" stroke-width="1"/><line x1="1001.5" y1="11" x2="1001.5" y2="15" stroke="#a0a0a0" stroke-width="1"/><line x1="1005.5" y1="12.5" x2="1005.5" y2="15" stroke="#a0a0a0" stroke-width="1"/><line x1="1010.5" y1="12.5" x2="1010.5" y2="15" stroke="#a0a0a0" stroke-width="1"/><line x1="1015.5" y1="12.5" x2="1015.5" y2="15" stroke="#a0a0a0" stroke-width="1"/><line x1="1020.5" y1="12.5" x2="1020.5" y2="15" stroke="#a0a0a0" stroke-width="1"/><line x1="1024.5" y1="0" x2="1024.5" y2="15" stroke="#a8a8a8" stroke-width="1"/><text x="1026.5" y="10" font-family="Liberation Sans" font-size="9.5" fill="#f0f0f0">170</text><line x1="1029.5" y1="12.5" x2="1029.5" y2="15" stroke="#a0a0a0" stroke-width="1"/><line x1="1034.5" y1="12.5" x2="1034.5" y2="15" stroke="#a0a0a0" stroke-width="1"/><line x1="1039.5" y1="12.5" x2="1039.5" y2="15" stroke="#a0a0a0" stroke-width="1"/><line x1="1043.5" y1="12.5" x2="1043.5" y2="15" stroke="#a0a0a0" stroke-width="1"/><line x1="1048.5" y1="11" x2="1048.5" y2="15" stroke="#a0a0a0" stroke-width="1"/><line x1="1053.5" y1="12.5" x2="1053.5" y2="15" stroke="#a0a0a0" stroke-width="1"/><line x1="1058.5" y1="12.5" x2="1058.5" y2="15" stroke="#a0a0a0" stroke-width="1"/><line x1="1062.5" y1="12.5" x2="1062.5" y2="15" stroke="#a0a0a0" stroke-width="1"/><line x1="1067.5" y1="12.5" x2="1067.5" y2="15" stroke="#a0a0a0" stroke-width="1"/><line x1="1072.5" y1="0" x2="1072.5" y2="15" stroke="#a8a8a8" stroke-width="1"/><text x="1074.5" y="10" font-family="Liberation Sans" font-size="9.5" fill="#f0f0f0">180</text><line x1="1077.5" y1="12.5" x2="1077.5" y2="15" stroke="#a0a0a0" stroke-width="1"/><line x1="1081.5" y1="12.5" x2="1081.5" y2="15" stroke="#a0a0a0" stroke-width="1"/><line x1="1086.5" y1="12.5" x2="1086.5" y2="15" stroke="#a0a0a0" stroke-width="1"/><line x1="1091.5" y1="12.5" x2="1091.5" y2="15" stroke="#a0a0a0" stroke-width="1"/><line x1="1096.5" y1="11" x2="1096.5" y2="15" stroke="#a0a0a0" stroke-width="1"/><line x1="1100.5" y1="12.5" x2="1100.5" y2="15" stroke="#a0a0a0" stroke-width="1"/><line x1="1105.5" y1="12.5" x2="1105.5" y2="15" stroke="#a0a0a0" stroke-width="1"/><line x1="1110.5" y1="12.5" x2="1110.5" y2="15" stroke="#a0a0a0" stroke-width="1"/><line x1="1114.5" y1="12.5" x2="1114.5" y2="15" stroke="#a0a0a0" stroke-width="1"/><line x1="1119.5" y1="0" x2="1119.5" y2="15" stroke="#a8a8a8" stroke-width="1"/><text x="1121.5" y="10" font-family="Liberation Sans" font-size="9.5" fill="#f0f0f0">190</text><line x1="1124.5" y1="12.5" x2="1124.5" y2="15" stroke="#a0a0a0" stroke-width="1"/><line x1="1129.5" y1="12.5" x2="1129.5" y2="15" stroke="#a0a0a0" stroke-width="1"/><line x1="1133.5" y1="12.5" x2="1133.5" y2="15" stroke="#a0a0a0" stroke-width="1"/><line x1="1138.5" y1="12.5" x2="1138.5" y2="15" stroke="#a0a0a0" stroke-width="1"/><line x1="1143.5" y1="11" x2="1143.5" y2="15" stroke="#a0a0a0" stroke-width="1"/><line x1="1148.5" y1="12.5" x2="1148.5" y2="15" stroke="#a0a0a0" stroke-width="1"/><line x1="1152.5" y1="12.5" x2="1152.5" y2="15" stroke="#a0a0a0" stroke-width="1"/><line x1="1157.5" y1="12.5" x2="1157.5" y2="15" stroke="#a0a0a0" stroke-width="1"/><line x1="1162.5" y1="12.5" x2="1162.5" y2="15" stroke="#a0a0a0" stroke-width="1"/><line x1="1167.5" y1="0" x2="1167.5" y2="15" stroke="#a8a8a8" stroke-width="1"/><text x="1169.5" y="10" font-family="Liberation Sans" font-size="9.5" fill="#f0f0f0">200</text><line x1="1171.5" y1="12.5" x2="1171.5" y2="15" stroke="#a0a0a0" stroke-width="1"/><line x1="1176.5" y1="12.5" x2="1176.5" y2="15" stroke="#a0a0a0" stroke-width="1"/><line x1="1181.5" y1="12.5" x2="1181.5" y2="15" stroke="#a0a0a0" stroke-width="1"/><line x1="1186.5" y1="12.5" x2="1186.5" y2="15" stroke="#a0a0a0" stroke-width="1"/><line x1="1190.5" y1="11" x2="1190.5" y2="15" stroke="#a0a0a0" stroke-width="1"/><line x1="1195.5" y1="12.5" x2="1195.5" y2="15" stroke="#a0a0a0" stroke-width="1"/><line x1="1200.5" y1="12.5" x2="1200.5" y2="15" stroke="#a0a0a0" stroke-width="1"/><line x1="1205.5" y1="12.5" x2="1205.5" y2="15" stroke="#a0a0a0" stroke-width="1"/><line x1="1209.5" y1="12.5" x2="1209.5" y2="15" stroke="#a0a0a0" stroke-width="1"/><line x1="1214.5" y1="0" x2="1214.5" y2="15" stroke="#a8a8a8" stroke-width="1"/><text x="1216.5" y="10" font-family="Liberation Sans" font-size="9.5" fill="#f0f0f0">210</text><line x1="1219.5" y1="12.5" x2="1219.5" y2="15" stroke="#a0a0a0" stroke-width="1"/><line x1="1223.5" y1="12.5" x2="1223.5" y2="15" stroke="#a0a0a0" stroke-width="1"/><line x1="1228.5" y1="12.5" x2="1228.5" y2="15" stroke="#a0a0a0" stroke-width="1"/><line x1="1233.5" y1="12.5" x2="1233.5" y2="15" stroke="#a0a0a0" stroke-width="1"/><line x1="1238.5" y1="11" x2="1238.5" y2="15" stroke="#a0a0a0" stroke-width="1"/><line x1="1242.5" y1="12.5" x2="1242.5" y2="15" stroke="#a0a0a0" stroke-width="1"/><line x1="1247.5" y1="12.5" x2="1247.5" y2="15" stroke="#a0a0a0" stroke-width="1"/><line x1="1252.5" y1="12.5" x2="1252.5" y2="15" stroke="#a0a0a0" stroke-width="1"/><line x1="1257.5" y1="12.5" x2="1257.5" y2="15" stroke="#a0a0a0" stroke-width="1"/><line x1="1261.5" y1="0" x2="1261.5" y2="15" stroke="#a8a8a8" stroke-width="1"/><text x="1263.5" y="10" font-family="Liberation Sans" font-size="9.5" fill="#f0f0f0">220</text><line x1="1266.5" y1="12.5" x2="1266.5" y2="15" stroke="#a0a0a0" stroke-width="1"/><line x1="1271.5" y1="12.5" x2="1271.5" y2="15" stroke="#a0a0a0" stroke-width="1"/><line x1="1276.5" y1="12.5" x2="1276.5" y2="15" stroke="#a0a0a0" stroke-width="1"/><line x1="1280.5" y1="12.5" x2="1280.5" y2="15" stroke="#a0a0a0" stroke-width="1"/></svg>
<div style="left:1285px;top:30px;width:506px;height:12px;background:#414141;border-top:1px solid #353535;"></div>
<div style="left:1497px;top:30px;width:1px;height:12px;background:#3a3a3a;"></div>
<svg style="left:1523px;top:33px" width="9" height="7" viewBox="0 0 9 7"><path d="M3.5 0.5 L0.8 3.5 L3.5 6.5 M7.8 0.5 L5.1 3.5 L7.8 6.5" fill="none" stroke="#e6e6e6" stroke-width="1.3"/></svg>
<svg style="left:1563px;top:33px" width="9" height="7" viewBox="0 0 9 7"><path d="M3.5 0.5 L0.8 3.5 L3.5 6.5 M7.8 0.5 L5.1 3.5 L7.8 6.5" fill="none" stroke="#e6e6e6" stroke-width="1.3"/></svg>
<div style="left:1285px;top:40px;width:252px;height:285px;background:#535353;"></div>
<div style="left:1285px;top:40px;width:252px;height:4px;background:#3a3a3a;"></div>
<div style="left:1285px;top:44px;width:252px;height:27px;background:#454545;"></div>
<div style="left:1285px;top:44px;width:66px;height:27px;background:#535353;"></div>
<svg style="left:1291px;top:52px" width="7" height="11" viewBox="0 0 7 11"><path d="M1 4 L3.5 1.5 L6 4 M1 7 L3.5 9.5 L6 7" fill="none" stroke="#cfcfcf" stroke-width="1.1"/></svg>
<div class="t" style="left:1304px;top:50px;font-size:12px;line-height:15px;color:#f0f0f0;">레이어</div>
<div style="left:1351px;top:44px;width:1px;height:27px;background:#3c3c3c;"></div>
<div class="t" style="left:1365px;top:49px;font-size:12px;line-height:15px;color:#c8c8c8;">링크</div>
<div style="left:1401px;top:44px;width:1px;height:27px;background:#3c3c3c;"></div>
<svg style="left:1497px;top:51px" width="14" height="12" viewBox="0 0 14 12"><path d="M1 2 L5 6 L1 10 M6 2 L10 6 L6 10" fill="none" stroke="#d0d0d0" stroke-width="1.1"/></svg>
<div style="left:1515px;top:50px;width:1px;height:15px;background:#c8c8c8;"></div>
<div style="left:1522px;top:53px;width:10px;height:1px;background:#d8d8d8;"></div>
<div style="left:1522px;top:55px;width:10px;height:1px;background:#d8d8d8;"></div>
<div style="left:1522px;top:57px;width:10px;height:1px;background:#d8d8d8;"></div>
<div style="left:1522px;top:59px;width:10px;height:1px;background:#d8d8d8;"></div>
<div style="left:1285px;top:71px;width:252px;height:3px;background:#4a4a4a;"></div>
<div style="left:1285px;top:95px;width:252px;height:1px;background:#5c5c5c;"></div>
<div style="left:1330px;top:75px;width:4px;height:20px;background:#3ee23e;"></div>
<svg style="left:1343px;top:80px" width="6" height="10" viewBox="0 0 6 10"><path d="M1 1 L5 5 L1 9" fill="none" stroke="#bdbdbd" stroke-width="1.1"/></svg>
<div class="t" style="left:1354px;top:79px;font-size:12px;line-height:14px;color:#f0f0f0;">레이어 3</div>
<div style="left:1520px;top:81px;width:8px;height:8px;border:1.6px solid #0a0a0a;"></div>
<div style="left:1285px;top:117px;width:252px;height:1px;background:#5c5c5c;"></div>
<div style="left:1330px;top:97px;width:4px;height:20px;background:#e01a1a;"></div>
<svg style="left:1343px;top:102px" width="6" height="10" viewBox="0 0 6 10"><path d="M1 1 L5 5 L1 9" fill="none" stroke="#bdbdbd" stroke-width="1.1"/></svg>
<div class="t" style="left:1354px;top:101px;font-size:12px;line-height:14px;color:#f0f0f0;">레이어 2</div>
<div style="left:1520px;top:103px;width:8px;height:8px;border:1.6px solid #0a0a0a;"></div>
<div style="left:1330px;top:118px;width:206px;height:22px;background:#4b6b8e;"></div>
<div style="left:1285px;top:139px;width:252px;height:1px;background:#5c5c5c;"></div>
<div style="left:1330px;top:119px;width:4px;height:20px;background:#5b8ee8;"></div>
<svg style="left:1343px;top:124px" width="6" height="10" viewBox="0 0 6 10"><path d="M1 1 L5 5 L1 9" fill="none" stroke="#bdbdbd" stroke-width="1.1"/></svg>
<div class="t" style="left:1354px;top:123px;font-size:12px;line-height:14px;color:#f0f0f0;">레이어 1</div>
<div style="left:1520px;top:125px;width:8px;height:8px;border:1.6px solid #0a0a0a;"></div>
<svg style="left:1496px;top:122px" width="13" height="13" viewBox="0 0 13 13"><path d="M2 11 L4 6 L8 2 L11 5 L7 9 Z" fill="#d8dde4"/><path d="M2 11 L5.5 7.5" stroke="#4b6b8e" stroke-width="1"/></svg>
<div style="left:1285px;top:291px;width:252px;height:1px;background:#5c5c5c;"></div>
<div class="t" style="left:1304px;top:298px;font-size:12px;line-height:14px;color:#ececec;">이지: 4-5, 레이어 3개</div>
<svg style="left:1475px;top:298px" width="12" height="12" viewBox="0 0 12 12"><rect x="0.5" y="0.5" width="11" height="11" fill="none" stroke="#bdbdbd"/><path d="M6 3 V9 M3 6 H9" stroke="#bdbdbd" stroke-width="1.2"/></svg>
<svg style="left:1502px;top:297px" width="12" height="13" viewBox="0 0 12 13"><path d="M1 2.5 H11 M4 2.5 V1 H8 V2.5" fill="none" stroke="#bdbdbd"/><path d="M2 4 H10 V12 H2 Z" fill="none" stroke="#bdbdbd"/><path d="M4.5 5 V11 M7.5 5 V11" stroke="#bdbdbd"/></svg>
<div style="left:1285px;top:316px;width:252px;height:9px;background:#474747;border-top:2px solid #393939;border-bottom:1px solid #3a3a3a;"></div>
<div style="left:1399px;top:319px;width:1px;height:4px;background:#2e2e2e;"></div>
<div style="left:1401px;top:319px;width:1px;height:4px;background:#2e2e2e;"></div>
<div style="left:1403px;top:319px;width:1px;height:4px;background:#2e2e2e;"></div>
<div style="left:1405px;top:319px;width:1px;height:4px;background:#2e2e2e;"></div>
<div style="left:1407px;top:319px;width:1px;height:4px;background:#2e2e2e;"></div>
<div style="left:1409px;top:319px;width:1px;height:4px;background:#2e2e2e;"></div>
<div style="left:1411px;top:319px;width:1px;height:4px;background:#2e2e2e;"></div>
<div style="left:1413px;top:319px;width:1px;height:4px;background:#2e2e2e;"></div>
<div style="left:1415px;top:319px;width:1px;height:4px;background:#2e2e2e;"></div>
<div style="left:1537px;top:42px;width:2px;height:947px;background:#3a3a3a;"></div>
<div style="left:1539px;top:42px;width:38px;height:947px;background:#535353;"></div>
<div style="left:1577px;top:42px;width:2px;height:947px;background:#3a3a3a;"></div>
<div style="left:1539px;top:110px;width:38px;height:1px;background:#3e3e3e;"></div>
<div style="left:1547px;top:46px;width:1px;height:4px;background:#2e2e2e;"></div>
<div style="left:1549px;top:46px;width:1px;height:4px;background:#2e2e2e;"></div>
<div style="left:1551px;top:46px;width:1px;height:4px;background:#2e2e2e;"></div>
<div style="left:1553px;top:46px;width:1px;height:4px;background:#2e2e2e;"></div>
<div style="left:1555px;top:46px;width:1px;height:4px;background:#2e2e2e;"></div>
<div style="left:1557px;top:46px;width:1px;height:4px;background:#2e2e2e;"></div>
<div style="left:1559px;top:46px;width:1px;height:4px;background:#2e2e2e;"></div>
<div style="left:1561px;top:46px;width:1px;height:4px;background:#2e2e2e;"></div>
<div style="left:1563px;top:46px;width:1px;height:4px;background:#2e2e2e;"></div>
<div style="left:1565px;top:46px;width:1px;height:4px;background:#2e2e2e;"></div>
<div style="left:1544px;top:55px;width:27px;height:22px;background:#383838;border-radius:3px;"></div>
<svg style="left:1548px;top:57px" width="19" height="18" viewBox="0 0 19 18"><path d="M9.5 1 L17 6 L9.5 11 L2 6 Z" fill="#d0d0d0"/><path d="M3 9.5 L9.5 14 L16 9.5 L17 11 L9.5 16 L2 11 Z" fill="#d0d0d0"/></svg>
<svg style="left:1548px;top:87px" width="19" height="12" viewBox="0 0 19 12"><rect x="1" y="2" width="10" height="7" rx="3.5" fill="none" stroke="#cfcfcf" stroke-width="1.8"/><rect x="8" y="3" width="10" height="7" rx="3.5" fill="none" stroke="#cfcfcf" stroke-width="1.8"/></svg>
<div style="left:1579px;top:42px;width:212px;height:947px;background:#535353;"></div>
<div style="left:1579px;top:42px;width:212px;height:28px;background:#454545;"></div>
<div style="left:1579px;top:42px;width:48px;height:28px;background:#535353;"></div>
<div class="t" style="left:1593px;top:49px;font-size:12px;line-height:15px;color:#f0f0f0;">속성</div>
<div style="left:1716px;top:42px;width:1px;height:28px;background:#3a3a3a;"></div>
<div class="t" style="left:1640px;top:49px;font-size:11.5px;line-height:15px;color:#bcbcbc;">CC Libraries</div>
<div class="t" style="left:1590px;top:80px;font-size:12px;line-height:15px;color:#ececec;">선택 항목 없음</div>
<div style="left:1579px;top:103px;width:212px;height:1px;background:#4a4a4a;"></div>
<div class="t" style="left:1590px;top:114px;font-size:12px;line-height:15px;color:#ececec;">문서</div>
<div style="left:1589px;top:137px;width:94px;height:21px;background:#464646;border:1px solid #6c6c6c;border-radius:2px;"></div>
<div style="left:1664px;top:137px;width:1px;height:21px;background:#6c6c6c;"></div>
<svg style="left:1669px;top:144px" width="10" height="6" viewBox="0 0 10 6"><path d="M1 1 L5 5 L9 1" fill="none" stroke="#d8d8d8" stroke-width="1.2"/></svg>
<div class="t" style="left:1595px;top:141px;font-size:12.5px;line-height:15px;color:#f0f0f0;">사륙판</div>
<div style="left:1710px;top:137px;width:22px;height:22px;background:#383838;border-radius:3px;"></div>
<svg style="left:1700px;top:130px" width="91" height="30" viewBox="1700 130 91 30"><rect x="1716" y="140.6" width="11.4" height="12" fill="none" stroke="#d0d0d0" stroke-width="1.2"/><path d="M1715 140.5 L1724.5 141.8 V156 L1715 154.2 Z" fill="#d0d0d0"/><path d="M1716.8 151 L1719.9 143.6 L1723 151 M1718 148.4 H1721.8" fill="none" stroke="#2e2e2e" stroke-width="1.2"/><rect x="1739.6" y="140.6" width="12" height="12" fill="none" stroke="#c4c4c4" stroke-width="1.2"/><path d="M1741 141 L1752 140.5 V154.2 L1742.3 156 Z" fill="#c4c4c4"/><path d="M1747 142.5 V152 M1743.5 145.5 H1750.5 M1747 145.5 L1744 150 M1747 145.5 L1750 150 M1745 149.5 H1749" fill="none" stroke="#353535" stroke-width="1.1"/><rect x="1787.5" y="140.6" width="8" height="15" fill="none" stroke="#c4c4c4" stroke-width="1.2"/></svg>
<div style="left:1760px;top:137px;width:22px;height:22px;background:#383838;border-radius:3px;"></div>
<svg style="left:1760px;top:137px" width="22" height="22" viewBox="1760 137 22 22"><rect x="1764.2" y="140.4" width="13.6" height="15.4" fill="none" stroke="#d0d0d0" stroke-width="1.2"/><circle cx="1771" cy="143.8" r="1.9" fill="#d0d0d0"/><path d="M1767.3 155.2 V149.5 Q1767.3 146.6 1771 146.6 Q1774.8 146.6 1774.8 149.5 V155.2 Z" fill="#d0d0d0"/></svg>
<div class="t" style="left:1596px;top:175px;font-size:12px;line-height:14px;color:#dcdcdc;">W:</div>
<div style="left:1610px;top:170px;width:73px;height:21px;background:#464646;border:1px solid #6c6c6c;border-radius:2px;"></div>
<div style="left:1627px;top:170px;width:1px;height:21px;background:#6c6c6c;"></div>
<svg style="left:1613px;top:173px" width="11" height="14" viewBox="0 0 11 14"><path d="M2 5 L5.5 1.5 L9 5 M2 9 L5.5 12.5 L9 9" fill="none" stroke="#cfcfcf" stroke-width="1.1"/></svg>
<div class="t" style="left:1633px;top:174px;font-size:12.5px;line-height:15px;color:#f0f0f0;">128mm</div>
<div class="t" style="left:1596px;top:201px;font-size:12px;line-height:14px;color:#dcdcdc;">H:</div>
<div style="left:1610px;top:196px;width:73px;height:21px;background:#464646;border:1px solid #6c6c6c;border-radius:2px;"></div>
<div style="left:1627px;top:196px;width:1px;height:21px;background:#6c6c6c;"></div>
<svg style="left:1613px;top:199px" width="11" height="14" viewBox="0 0 11 14"><path d="M2 5 L5.5 1.5 L9 5 M2 9 L5.5 12.5 L9 9" fill="none" stroke="#cfcfcf" stroke-width="1.1"/></svg>
<div class="t" style="left:1633px;top:200px;font-size:12.5px;line-height:15px;color:#f0f0f0;">188mm</div>
<svg style="left:1700px;top:165px" width="30" height="28" viewBox="1700 165 30 28"><path d="M1710 185.5 V177.6 H1715.2 V172.3 H1717.8 V185.5 Z M1710.7 176.3 L1713.6 172.8 V176.3 Z M1727 185.5 V177.6 H1721.8 V172.3 H1719.2 V185.5 Z M1726.3 176.3 L1723.4 172.8 V176.3 Z" fill="#d0d0d0"/><path d="M1718.5 169.2 V172 M1718.5 186 V189" stroke="#d0d0d0" stroke-width="1"/></svg>
<div style="left:1734px;top:170px;width:70px;height:21px;background:#464646;border:1px solid #6c6c6c;border-radius:2px;"></div>
<div class="t" style="left:1740px;top:174px;font-size:12.5px;line-height:15px;color:#f0f0f0;">208</div>
<div style="left:1710px;top:201px;width:12px;height:12px;background:#cfcfcf;border-radius:2px;"></div>
<svg style="left:1711px;top:202px" width="10" height="10" viewBox="0 0 10 10"><path d="M2 5 L4.2 7.2 L8 2.8" fill="none" stroke="#3a3a3a" stroke-width="1.6"/></svg>
<div class="t" style="left:1729px;top:200px;font-size:12px;line-height:14px;color:#ececec;">페이지 마...</div>
<div class="t" style="left:1590px;top:227px;font-size:12px;line-height:15px;color:#ececec;">여백</div>
<svg style="left:1590px;top:251px" width="17" height="18" viewBox="0 0 17 18"><rect x="0" y="0" width="16" height="4" fill="#cfcfcf"/><rect x="0.5" y="7.5" width="15" height="9" fill="none" stroke="#cfcfcf" stroke-width="1.2"/></svg>
<div style="left:1609px;top:249px;width:74px;height:21px;background:#464646;border:1px solid #6c6c6c;border-radius:2px;"></div>
<div style="left:1626px;top:249px;width:1px;height:21px;background:#6c6c6c;"></div>
<svg style="left:1612px;top:252px" width="11" height="14" viewBox="0 0 11 14"><path d="M2 5 L5.5 1.5 L9 5 M2 9 L5.5 12.5 L9 9" fill="none" stroke="#cfcfcf" stroke-width="1.1"/></svg>
<div class="t" style="left:1632px;top:253px;font-size:12.5px;line-height:15px;color:#f0f0f0;">22mm</div>
<svg style="left:1590px;top:277px" width="17" height="18" viewBox="0 0 17 18"><rect x="0.5" y="0.5" width="15" height="9" fill="none" stroke="#cfcfcf" stroke-width="1.2"/><rect x="0" y="12" width="16" height="4" fill="#cfcfcf"/></svg>
<div style="left:1609px;top:275px;width:74px;height:21px;background:#464646;border:1px solid #6c6c6c;border-radius:2px;"></div>
<div style="left:1626px;top:275px;width:1px;height:21px;background:#6c6c6c;"></div>
<svg style="left:1612px;top:278px" width="11" height="14" viewBox="0 0 11 14"><path d="M2 5 L5.5 1.5 L9 5 M2 9 L5.5 12.5 L9 9" fill="none" stroke="#cfcfcf" stroke-width="1.1"/></svg>
<div class="t" style="left:1632px;top:279px;font-size:12.5px;line-height:15px;color:#f0f0f0;">38mm</div>
<svg style="left:1688px;top:260px" width="22" height="22" viewBox="1688 260 22 22"><rect x="1696.7" y="265.75" width="4.8" height="11.5" rx="2.4" transform="rotate(22 1699.1 271.5)" fill="none" stroke="#c4c4c4" stroke-width="1.3"/><path d="M1693 265.3 L1704.8 276.9" stroke="#c4c4c4" stroke-width="1.3"/></svg>
<svg style="left:1716px;top:251px" width="17" height="17" viewBox="0 0 17 17"><rect x="0.5" y="2.5" width="10" height="11" fill="none" stroke="#cfcfcf" stroke-width="1.2"/><rect x="12" y="0" width="4" height="17" fill="#cfcfcf"/></svg>
<div style="left:1735px;top:249px;width:70px;height:21px;background:#464646;border:1px solid #6c6c6c;border-radius:2px;"></div>
<div style="left:1752px;top:249px;width:1px;height:21px;background:#6c6c6c;"></div>
<svg style="left:1738px;top:252px" width="11" height="14" viewBox="0 0 11 14"><path d="M2 5 L5.5 1.5 L9 5 M2 9 L5.5 12.5 L9 9" fill="none" stroke="#cfcfcf" stroke-width="1.1"/></svg>
<div class="t" style="left:1758px;top:253px;font-size:12.5px;line-height:15px;color:#f0f0f0;">23mm</div>
<svg style="left:1716px;top:277px" width="17" height="17" viewBox="0 0 17 17"><rect x="0" y="0" width="4" height="17" fill="#cfcfcf"/><rect x="5.5" y="2.5" width="10" height="11" fill="none" stroke="#cfcfcf" stroke-width="1.2"/></svg>
<div style="left:1735px;top:275px;width:70px;height:21px;background:#464646;border:1px solid #6c6c6c;border-radius:2px;"></div>
<div style="left:1752px;top:275px;width:1px;height:21px;background:#6c6c6c;"></div>
<svg style="left:1738px;top:278px" width="11" height="14" viewBox="0 0 11 14"><path d="M2 5 L5.5 1.5 L9 5 M2 9 L5.5 12.5 L9 9" fill="none" stroke="#cfcfcf" stroke-width="1.1"/></svg>
<div class="t" style="left:1758px;top:279px;font-size:12.5px;line-height:15px;color:#f0f0f0;">20mm</div>
<div class="t" style="left:1590px;top:315px;font-size:12px;line-height:15px;color:#ececec;">방향:</div>
<div style="left:1689px;top:311px;width:110px;height:20px;background:#464646;border:1px solid #6c6c6c;border-radius:2px;"></div>
<div class="t" style="left:1695px;top:315px;font-size:12.5px;line-height:15px;color:#f0f0f0;">가로</div>
<div style="left:1589px;top:341px;width:220px;height:20px;border:1px solid #787878;border-radius:2px;"></div>
<div class="t" style="left:1589px;top:344px;width:218px;text-align:center;font-size:12px;line-height:14px;color:#ececec;">레이아웃 조정</div>
<div style="left:1579px;top:366px;width:212px;height:1px;background:#4a4a4a;"></div>
<div class="t" style="left:1590px;top:378px;font-size:12px;line-height:15px;color:#ececec;">페이지</div>
<div style="left:1589px;top:400px;width:94px;height:21px;background:#464646;border:1px solid #6c6c6c;border-radius:2px;"></div>
<div style="left:1664px;top:400px;width:1px;height:21px;background:#6c6c6c;"></div>
<svg style="left:1669px;top:407px" width="10" height="6" viewBox="0 0 10 6"><path d="M1 1 L5 5 L9 1" fill="none" stroke="#d8d8d8" stroke-width="1.2"/></svg>
<div class="t" style="left:1595px;top:404px;font-size:12.5px;line-height:15px;color:#f0f0f0;">4</div>
<svg style="left:1762px;top:404px" width="12" height="12" viewBox="0 0 12 12"><rect x="0.5" y="0.5" width="10" height="10" fill="none" stroke="#bdbdbd"/><path d="M5.5 2.5 V8.5 M2.5 5.5 H8.5" stroke="#bdbdbd" stroke-width="1.1"/></svg>
<div style="left:1788px;top:404px;width:4px;height:11px;background:#bdbdbd;"></div>
<div style="left:1589px;top:429px;width:220px;height:20px;border:1px solid #787878;border-radius:2px;"></div>
<div class="t" style="left:1589px;top:432px;width:218px;text-align:center;font-size:12px;line-height:14px;color:#ececec;">페이지 편집</div>
<div style="left:1579px;top:456px;width:212px;height:1px;background:#4a4a4a;"></div>
<div class="t" style="left:1590px;top:472px;font-size:12px;line-height:15px;color:#ececec;">눈금자 및 격자</div>
<div style="left:1710px;top:467px;width:22px;height:22px;background:#383838;border-radius:3px;"></div>
<svg style="left:1700px;top:460px" width="91" height="75" viewBox="1700 460 91 75"><path d="M1713.3 470 H1729.2 V474 H1717 V485.8 H1713.3 Z" fill="#d2d2d2"/><g fill="#2e2e2e"><rect x="1718" y="471.5" width="1" height="1"/><rect x="1721" y="471.5" width="1" height="1"/><rect x="1724" y="471.5" width="1" height="1"/><rect x="1727" y="471.5" width="1" height="1"/><rect x="1714.6" y="475" width="1" height="1"/><rect x="1714.6" y="478" width="1" height="1"/><rect x="1714.6" y="481" width="1" height="1"/><rect x="1714.6" y="484" width="1" height="1"/></g><g fill="none" stroke="#d2d2d2" stroke-width="1"><rect x="1738.5" y="470.5" width="15" height="15"/><path d="M1738.5 473.5 H1753.5 M1738.5 476.5 H1753.5 M1738.5 479.5 H1753.5 M1738.5 482.5 H1753.5 M1741.5 473.5 V482.5 M1750.5 473.5 V482.5"/><rect x="1763.5" y="470.5" width="15" height="15"/><path d="M1768.5 470.5 V485.5 M1773.5 470.5 V485.5 M1763.5 475.5 H1778.5 M1763.5 480.5 H1778.5"/><path d="M1788.5 470.5 V485.5 M1788.5 473.5 H1791 M1788.5 476.5 H1791 M1788.5 479.5 H1791 M1788.5 482.5 H1791"/></g></svg>
<div style="left:1579px;top:496px;width:212px;height:1px;background:#4a4a4a;"></div>
<div class="t" style="left:1590px;top:512px;font-size:12px;line-height:15px;color:#ececec;">안내선</div>
<div style="left:1710px;top:508px;width:22px;height:21px;background:#383838;border-radius:3px;"></div>
<div style="left:1748px;top:508px;width:22px;height:21px;background:#383838;border-radius:3px;"></div>
<div style="left:1786px;top:508px;width:10px;height:21px;background:#383838;border-radius:3px;"></div>
<svg style="left:1700px;top:500px" width="91" height="35" viewBox="1700 500 91 35"><g fill="none" stroke="#d2d2d2" stroke-width="1"><path d="M1716.5 510 V526 M1719.5 510 V526 M1713 515.5 H1729 M1713 522.5 H1729"/><path d="M1754.5 510 V526 M1757.5 510 V526 M1751 515.5 H1767 M1751 522.5 H1761"/><path d="M1762.8 520.5 V518.6 A2.4 2.4 0 0 1 1767.6 518.6" stroke-width="1.2"/></g><rect x="1761" y="520.5" width="7.2" height="6" fill="#d2d2d2"/><path d="M1786 515.5 H1791 M1786 522.5 H1791" stroke="#d2d2d2"/></svg>
<div style="left:1579px;top:536px;width:212px;height:1px;background:#4a4a4a;"></div>
<div class="t" style="left:1590px;top:543px;font-size:12px;line-height:15px;color:#ececec;">빠른 작업</div>
<div style="left:1589px;top:565px;width:220px;height:20px;border:1px solid #787878;border-radius:2px;"></div>
<div class="t" style="left:1589px;top:568px;width:218px;text-align:center;font-size:12px;line-height:14px;color:#ececec;">파일 가져오기</div>
<div style="left:1589px;top:595px;width:220px;height:20px;border:1px solid #787878;border-radius:2px;"></div>
<div class="t" style="left:1589px;top:598px;width:218px;text-align:center;font-size:12px;line-height:14px;color:#ececec;">레이아웃 격자 옵션</div>
<div style="left:1589px;top:626px;width:220px;height:20px;border:1px solid #787878;border-radius:2px;"></div>
<div class="t" style="left:1589px;top:629px;width:218px;text-align:center;font-size:12px;line-height:14px;color:#ececec;">텍스트를 이미지로</div>
<div style="left:1069px;top:64px;width:234px;height:925px;background:#535353;border-left:1px solid #3c3c3c;border-radius:0 6px 0 0;"></div>
<div style="left:1069px;top:64px;width:234px;height:14px;background:#474747;border-radius:0 6px 0 0;"></div>
<svg style="left:1273px;top:68px" width="9" height="7" viewBox="0 0 9 7"><path d="M3.5 0.5 L0.8 3.5 L3.5 6.5 M7.8 0.5 L5.1 3.5 L7.8 6.5" fill="none" stroke="#e6e6e6" stroke-width="1.3"/></svg>
<svg style="left:1290px;top:67px" width="8" height="8" viewBox="0 0 8 8"><path d="M1.2 1.2 L6.8 6.8 M6.8 1.2 L1.2 6.8" stroke="#c8c8c8" stroke-width="2" stroke-linecap="round"/></svg>
<div style="left:1069px;top:78px;width:234px;height:27px;background:#454545;"></div>
<div style="left:1070px;top:78px;width:66px;height:27px;background:#535353;"></div>
<svg style="left:1077px;top:86px" width="7" height="11" viewBox="0 0 7 11"><path d="M1 4 L3.5 1.5 L6 4 M1 7 L3.5 9.5 L6 7" fill="none" stroke="#cfcfcf" stroke-width="1.1"/></svg>
<div class="t" style="left:1090px;top:83px;font-size:12px;line-height:15px;color:#f0f0f0;">페이지</div>
<div style="left:1288px;top:87px;width:10px;height:1px;background:#d8d8d8;"></div>
<div style="left:1288px;top:89px;width:10px;height:1px;background:#d8d8d8;"></div>
<div style="left:1288px;top:91px;width:10px;height:1px;background:#d8d8d8;"></div>
<div style="left:1288px;top:93px;width:10px;height:1px;background:#d8d8d8;"></div>
<div style="left:1069px;top:77px;width:234px;height:1px;background:#3c3c3c;"></div>
<div class="t" style="left:1074px;top:112px;font-size:12.5px;line-height:14px;color:#ececec;">[없음]</div>
<div style="left:1266px;top:110px;width:15px;height:22px;background:#fff;"></div>
<div class="t" style="left:1074px;top:142px;font-size:12.5px;line-height:14px;color:#ececec;">A-마스터</div>
<div style="left:1250px;top:139px;width:15px;height:22px;background:#fff;"></div>
<div style="left:1266px;top:139px;width:15px;height:22px;background:#fff;"></div>
<div class="t" style="left:1074px;top:171px;font-size:12.5px;line-height:14px;color:#ececec;">0-본문</div>
<div style="left:1250px;top:168px;width:15px;height:22px;background:#fff;"></div>
<div style="left:1266px;top:168px;width:15px;height:22px;background:#fff;"></div>
<div style="left:1070px;top:261px;width:233px;height:2px;background:#5e5e5e;"></div>
<div style="left:1290px;top:266px;width:13px;height:723px;background:#494949;"></div>
<svg style="left:1291px;top:268px" width="11" height="7" viewBox="0 0 11 7"><path d="M1.5 5.5 L5.5 1.5 L9.5 5.5" fill="none" stroke="#8a8a8a" stroke-width="1.1"/></svg>
<div style="left:1292px;top:278px;width:9px;height:79px;background:#6a6a6a;border-radius:5px;"></div>
<div style="left:1180px;top:267px;width:1px;height:47px;background:#b8b8b8;"></div>
<svg style="left:1187px;top:267px" width="12" height="6" viewBox="0 0 12 6"><path d="M0 0 H12 L6 6 Z" fill="#c8c8c8"/></svg>
<div style="left:1181px;top:273px;width:25px;height:35px;background:#fff;"></div>
<div style="left:1186px;top:279px;width:6px;height:2px;background:#111;"></div>
<div style="left:1189px;top:301px;width:4px;height:1px;background:#777;"></div>
<div class="t" style="left:1141px;top:314px;width:100px;text-align:center;font-size:12px;line-height:14px;color:#ececec;">1</div>
<div style="left:1155px;top:337px;width:51px;height:36px;background:#626262;border:1px solid #8a8a8a;"></div>
<div style="left:1158px;top:342px;width:3px;height:2px;background:#e6e6e6;"></div>
<div style="left:1158px;top:349px;width:13px;height:1px;background:#cfcfcf;"></div>
<div style="left:1158px;top:352px;width:17px;height:5px;background:#c6c6c6;"></div>
<div style="left:1158px;top:358px;width:17px;height:7px;background:#bdbdbd;"></div>
<div style="left:1183px;top:340px;width:18px;height:6px;background:#c4c4c4;"></div>
<div style="left:1183px;top:348px;width:18px;height:4px;background:#c4c4c4;"></div>
<div style="left:1183px;top:354px;width:18px;height:4px;background:#c4c4c4;"></div>
<div style="left:1183px;top:361px;width:18px;height:4px;background:#c4c4c4;"></div>
<div style="left:1203px;top:338px;width:2px;height:34px;background:#f4f4f4;"></div>
<div style="left:1179px;top:338px;width:2px;height:34px;background:#f4f4f4;"></div>
<div style="left:1180px;top:331px;width:1px;height:47px;background:#c8c8c8;"></div>
<div class="t" style="left:1130px;top:378px;width:100px;text-align:center;font-size:12px;line-height:14px;color:#ececec;">2-3</div>
<div style="left:1155px;top:401px;width:25px;height:36px;background:#4d78ab;"></div>
<div style="left:1179px;top:401px;width:27px;height:36px;background:#98c2f2;"></div>
<div style="left:1184px;top:404px;width:17px;height:28px;background:#517db1;"></div>
<div style="left:1184px;top:403px;width:2px;height:1px;background:#1a2a50;"></div>
<div style="left:1158px;top:404px;width:4px;height:2px;background:#9dbce0;"></div>
<div style="left:1158px;top:408px;width:17px;height:2px;background:#9dbce0;"></div>
<div style="left:1158px;top:413px;width:17px;height:2px;background:#9dbce0;"></div>
<div style="left:1158px;top:418px;width:17px;height:2px;background:#9dbce0;"></div>
<div style="left:1163px;top:423px;width:11px;height:2px;background:#9dbce0;"></div>
<div style="left:1173px;top:425px;width:3px;height:1px;background:#dfe9f5;"></div>
<div style="left:1180px;top:395px;width:1px;height:47px;background:#c8c8c8;"></div>
<div style="left:1166px;top:442px;width:25px;height:14px;background:#2d7be0;"></div>
<div class="t" style="left:1130px;top:442px;width:100px;text-align:center;font-size:12px;line-height:14px;color:#ececec;">4-5</div>
<div style="left:1155px;top:465px;width:51px;height:35px;background:#fff;"></div>
<div class="t" style="left:1156px;top:466px;font-size:10px;line-height:11px;color:#1a1a2a;">0</div>
<div class="t" style="left:1197px;top:466px;font-size:10px;line-height:11px;color:#1a1a2a;">0</div>
<div style="left:1158px;top:476px;width:16px;height:1px;background:#333;"></div>
<div style="left:1158px;top:479px;width:17px;height:5px;background:#3a3a3a;"></div>
<div style="left:1158px;top:485px;width:17px;height:1px;background:#444;"></div>
<div style="left:1158px;top:488px;width:16px;height:4px;background:#3c3c3c;"></div>
<div style="left:1158px;top:496px;width:5px;height:1px;background:#666;"></div>
<div style="left:1184px;top:468px;width:13px;height:4px;background:#3a3a3a;"></div>
<div style="left:1184px;top:473px;width:8px;height:1px;background:#555;"></div>
<div style="left:1184px;top:475px;width:8px;height:3px;background:#111;"></div>
<div style="left:1184px;top:477px;width:17px;height:1px;background:#555;"></div>
<div style="left:1184px;top:482px;width:15px;height:1px;background:#222;"></div>
<div style="left:1184px;top:493px;width:15px;height:1px;background:#999;"></div>
<div style="left:1180px;top:459px;width:1px;height:47px;background:#c8c8c8;"></div>
<div class="t" style="left:1130px;top:506px;width:100px;text-align:center;font-size:12px;line-height:14px;color:#ececec;">6-7</div>
<div style="left:1155px;top:529px;width:51px;height:35px;background:#fff;"></div>
<div class="t" style="left:1156px;top:530px;font-size:10px;line-height:11px;color:#1a1a2a;">0</div>
<div class="t" style="left:1197px;top:530px;font-size:10px;line-height:11px;color:#1a1a2a;">0</div>
<div style="left:1158px;top:540px;width:16px;height:1px;background:#444;"></div>
<div style="left:1158px;top:543px;width:17px;height:3px;background:#333;"></div>
<div style="left:1158px;top:547px;width:17px;height:3px;background:#222;"></div>
<div style="left:1158px;top:551px;width:17px;height:1px;background:#555;"></div>
<div style="left:1158px;top:553px;width:12px;height:3px;background:#333;"></div>
<div style="left:1158px;top:560px;width:5px;height:1px;background:#666;"></div>
<div style="left:1184px;top:532px;width:13px;height:3px;background:#333;"></div>
<div style="left:1184px;top:536px;width:15px;height:1px;background:#444;"></div>
<div style="left:1184px;top:539px;width:10px;height:3px;background:#222;"></div>
<div style="left:1184px;top:543px;width:17px;height:4px;background:#3a3a3a;"></div>
<div style="left:1184px;top:549px;width:16px;height:1px;background:#444;"></div>
<div style="left:1184px;top:557px;width:15px;height:1px;background:#999;"></div>
<div style="left:1180px;top:523px;width:1px;height:47px;background:#c8c8c8;"></div>
<div class="t" style="left:1130px;top:570px;width:100px;text-align:center;font-size:12px;line-height:14px;color:#ececec;">8-9</div>
<div style="left:1155px;top:593px;width:51px;height:35px;background:#fff;"></div>
<div class="t" style="left:1156px;top:594px;font-size:10px;line-height:11px;color:#1a1a2a;">0</div>
<div class="t" style="left:1197px;top:594px;font-size:10px;line-height:11px;color:#1a1a2a;">0</div>
<div style="left:1158px;top:604px;width:16px;height:1px;background:#333;"></div>
<div style="left:1158px;top:607px;width:17px;height:5px;background:#3a3a3a;"></div>
<div style="left:1158px;top:613px;width:17px;height:1px;background:#444;"></div>
<div style="left:1158px;top:616px;width:16px;height:4px;background:#3c3c3c;"></div>
<div style="left:1158px;top:624px;width:5px;height:1px;background:#666;"></div>
<div style="left:1184px;top:596px;width:13px;height:4px;background:#3a3a3a;"></div>
<div style="left:1184px;top:601px;width:8px;height:1px;background:#555;"></div>
<div style="left:1184px;top:603px;width:8px;height:3px;background:#111;"></div>
<div style="left:1184px;top:605px;width:17px;height:1px;background:#555;"></div>
<div style="left:1184px;top:610px;width:15px;height:1px;background:#222;"></div>
<div style="left:1184px;top:621px;width:15px;height:1px;background:#999;"></div>
<div style="left:1180px;top:587px;width:1px;height:47px;background:#c8c8c8;"></div>
<div class="t" style="left:1130px;top:634px;width:100px;text-align:center;font-size:12px;line-height:14px;color:#ececec;">10-11</div>
<div style="left:1155px;top:657px;width:51px;height:35px;background:#fff;"></div>
<div class="t" style="left:1156px;top:658px;font-size:10px;line-height:11px;color:#1a1a2a;">0</div>
<div class="t" style="left:1197px;top:658px;font-size:10px;line-height:11px;color:#1a1a2a;">0</div>
<div style="left:1158px;top:668px;width:16px;height:1px;background:#444;"></div>
<div style="left:1158px;top:671px;width:17px;height:3px;background:#333;"></div>
<div style="left:1158px;top:675px;width:17px;height:3px;background:#222;"></div>
<div style="left:1158px;top:679px;width:17px;height:1px;background:#555;"></div>
<div style="left:1158px;top:681px;width:12px;height:3px;background:#333;"></div>
<div style="left:1158px;top:688px;width:5px;height:1px;background:#666;"></div>
<div style="left:1184px;top:660px;width:13px;height:3px;background:#333;"></div>
<div style="left:1184px;top:664px;width:15px;height:1px;background:#444;"></div>
<div style="left:1184px;top:667px;width:10px;height:3px;background:#222;"></div>
<div style="left:1184px;top:671px;width:17px;height:4px;background:#3a3a3a;"></div>
<div style="left:1184px;top:677px;width:16px;height:1px;background:#444;"></div>
<div style="left:1184px;top:685px;width:15px;height:1px;background:#999;"></div>
<div style="left:1180px;top:651px;width:1px;height:47px;background:#c8c8c8;"></div>
<div class="t" style="left:1130px;top:698px;width:100px;text-align:center;font-size:12px;line-height:14px;color:#ececec;">12-13</div>
<div style="left:1155px;top:721px;width:51px;height:35px;background:#fff;"></div>
<div class="t" style="left:1156px;top:722px;font-size:10px;line-height:11px;color:#1a1a2a;">0</div>
<div class="t" style="left:1197px;top:722px;font-size:10px;line-height:11px;color:#1a1a2a;">0</div>
<div style="left:1158px;top:732px;width:16px;height:1px;background:#333;"></div>
<div style="left:1158px;top:735px;width:17px;height:5px;background:#3a3a3a;"></div>
<div style="left:1158px;top:741px;width:17px;height:1px;background:#444;"></div>
<div style="left:1158px;top:744px;width:16px;height:4px;background:#3c3c3c;"></div>
<div style="left:1158px;top:752px;width:5px;height:1px;background:#666;"></div>
<div style="left:1184px;top:724px;width:13px;height:4px;background:#3a3a3a;"></div>
<div style="left:1184px;top:729px;width:8px;height:1px;background:#555;"></div>
<div style="left:1184px;top:731px;width:8px;height:3px;background:#111;"></div>
<div style="left:1184px;top:733px;width:17px;height:1px;background:#555;"></div>
<div style="left:1184px;top:738px;width:15px;height:1px;background:#222;"></div>
<div style="left:1184px;top:749px;width:15px;height:1px;background:#999;"></div>
<div style="left:1180px;top:715px;width:1px;height:47px;background:#c8c8c8;"></div>
<div class="t" style="left:1130px;top:762px;width:100px;text-align:center;font-size:12px;line-height:14px;color:#ececec;">14-15</div>
<div style="left:1155px;top:785px;width:51px;height:35px;background:#fff;"></div>
<div class="t" style="left:1156px;top:786px;font-size:10px;line-height:11px;color:#1a1a2a;">0</div>
<div class="t" style="left:1197px;top:786px;font-size:10px;line-height:11px;color:#1a1a2a;">0</div>
<div style="left:1158px;top:796px;width:16px;height:1px;background:#444;"></div>
<div style="left:1158px;top:799px;width:17px;height:3px;background:#333;"></div>
<div style="left:1158px;top:803px;width:17px;height:3px;background:#222;"></div>
<div style="left:1158px;top:807px;width:17px;height:1px;background:#555;"></div>
<div style="left:1158px;top:809px;width:12px;height:3px;background:#333;"></div>
<div style="left:1158px;top:816px;width:5px;height:1px;background:#666;"></div>
<div style="left:1184px;top:788px;width:13px;height:3px;background:#333;"></div>
<div style="left:1184px;top:792px;width:15px;height:1px;background:#444;"></div>
<div style="left:1184px;top:795px;width:10px;height:3px;background:#222;"></div>
<div style="left:1184px;top:799px;width:17px;height:4px;background:#3a3a3a;"></div>
<div style="left:1184px;top:805px;width:16px;height:1px;background:#444;"></div>
<div style="left:1184px;top:813px;width:15px;height:1px;background:#999;"></div>
<div style="left:1180px;top:779px;width:1px;height:47px;background:#c8c8c8;"></div>
<div class="t" style="left:1130px;top:826px;width:100px;text-align:center;font-size:12px;line-height:14px;color:#ececec;">16-17</div>
<div style="left:1155px;top:849px;width:51px;height:35px;background:#fff;"></div>
<div class="t" style="left:1156px;top:850px;font-size:10px;line-height:11px;color:#1a1a2a;">0</div>
<div class="t" style="left:1197px;top:850px;font-size:10px;line-height:11px;color:#1a1a2a;">0</div>
<div style="left:1158px;top:860px;width:16px;height:1px;background:#333;"></div>
<div style="left:1158px;top:863px;width:17px;height:5px;background:#3a3a3a;"></div>
<div style="left:1158px;top:869px;width:17px;height:1px;background:#444;"></div>
<div style="left:1158px;top:872px;width:16px;height:4px;background:#3c3c3c;"></div>
<div style="left:1158px;top:880px;width:5px;height:1px;background:#666;"></div>
<div style="left:1184px;top:852px;width:13px;height:4px;background:#3a3a3a;"></div>
<div style="left:1184px;top:857px;width:8px;height:1px;background:#555;"></div>
<div style="left:1184px;top:859px;width:8px;height:3px;background:#111;"></div>
<div style="left:1184px;top:861px;width:17px;height:1px;background:#555;"></div>
<div style="left:1184px;top:866px;width:15px;height:1px;background:#222;"></div>
<div style="left:1184px;top:877px;width:15px;height:1px;background:#999;"></div>
<div style="left:1180px;top:843px;width:1px;height:47px;background:#c8c8c8;"></div>
<div class="t" style="left:1130px;top:890px;width:100px;text-align:center;font-size:12px;line-height:14px;color:#ececec;">18-19</div>
<div style="left:1155px;top:913px;width:51px;height:35px;background:#fff;"></div>
<div class="t" style="left:1156px;top:914px;font-size:10px;line-height:11px;color:#1a1a2a;">0</div>
<div class="t" style="left:1197px;top:914px;font-size:10px;line-height:11px;color:#1a1a2a;">0</div>
<div style="left:1158px;top:924px;width:16px;height:1px;background:#444;"></div>
<div style="left:1158px;top:927px;width:17px;height:3px;background:#333;"></div>
<div style="left:1158px;top:931px;width:17px;height:3px;background:#222;"></div>
<div style="left:1158px;top:935px;width:17px;height:1px;background:#555;"></div>
<div style="left:1158px;top:937px;width:12px;height:3px;background:#333;"></div>
<div style="left:1158px;top:944px;width:5px;height:1px;background:#666;"></div>
<div style="left:1184px;top:916px;width:13px;height:3px;background:#333;"></div>
<div style="left:1184px;top:920px;width:15px;height:1px;background:#444;"></div>
<div style="left:1184px;top:923px;width:10px;height:3px;background:#222;"></div>
<div style="left:1184px;top:927px;width:17px;height:4px;background:#3a3a3a;"></div>
<div style="left:1184px;top:933px;width:16px;height:1px;background:#444;"></div>
<div style="left:1184px;top:941px;width:15px;height:1px;background:#999;"></div>
<div style="left:1180px;top:907px;width:1px;height:47px;background:#c8c8c8;"></div>
<div class="t" style="left:1130px;top:954px;width:100px;text-align:center;font-size:12px;line-height:14px;color:#ececec;">20-21</div>
<div style="left:1155px;top:977px;width:51px;height:35px;background:#fff;"></div>
<div class="t" style="left:1156px;top:978px;font-size:10px;line-height:11px;color:#1a1a2a;">0</div>
<div class="t" style="left:1197px;top:978px;font-size:10px;line-height:11px;color:#1a1a2a;">0</div>
<div style="left:1158px;top:988px;width:16px;height:1px;background:#333;"></div>
<div style="left:1158px;top:991px;width:17px;height:5px;background:#3a3a3a;"></div>
<div style="left:1158px;top:997px;width:17px;height:1px;background:#444;"></div>
<div style="left:1158px;top:1000px;width:16px;height:4px;background:#3c3c3c;"></div>
<div style="left:1158px;top:1008px;width:5px;height:1px;background:#666;"></div>
<div style="left:1184px;top:980px;width:13px;height:4px;background:#3a3a3a;"></div>
<div style="left:1184px;top:985px;width:8px;height:1px;background:#555;"></div>
<div style="left:1184px;top:987px;width:8px;height:3px;background:#111;"></div>
<div style="left:1184px;top:989px;width:17px;height:1px;background:#555;"></div>
<div style="left:1184px;top:994px;width:15px;height:1px;background:#222;"></div>
<div style="left:1184px;top:1005px;width:15px;height:1px;background:#999;"></div>
<div style="left:1180px;top:971px;width:1px;height:47px;background:#c8c8c8;"></div>
<div class="t" style="left:1130px;top:1018px;width:100px;text-align:center;font-size:12px;line-height:14px;color:#ececec;">22-23</div>
<div style="left:850px;top:946px;width:411px;height:36px;background:#505050;border:1px solid #474747;border-radius:4px;"></div>
<div style="left:854px;top:950px;width:6px;height:27px;background:#3a3a3a;border:1px solid #5a5a5a;border-radius:3px;"></div>
<div style="left:865px;top:950px;width:110px;height:28px;border:1px solid #6a6a6a;border-radius:3px;"></div>
<svg style="left:876px;top:956px" width="16" height="16" viewBox="0 0 16 16"><rect x="0.75" y="0.75" width="14.5" height="14.5" fill="none" stroke="#cfcfcf" stroke-width="1.3"/><path d="M1 1 L15 15 M15 1 L1 15" stroke="#cfcfcf" stroke-width="1.1"/></svg>
<div class="t" style="left:898px;top:957px;font-size:12.5px;line-height:15px;color:#ececec;">프레임 추가</div>
<div style="left:979px;top:950px;width:150px;height:28px;border:1px solid #6a6a6a;border-radius:3px;"></div>
<svg style="left:984px;top:954px" width="20" height="20" viewBox="0 0 20 20"><path d="M1 8 L8 3 L15 8 V17 H1 Z" fill="none" stroke="#cfcfcf" stroke-width="1.3"/><circle cx="14" cy="14" r="5" fill="#cfcfcf"/><path d="M14 11 V17 M11 14 H17" stroke="#4a4a4a" stroke-width="1.5"/></svg>
<div class="t" style="left:1008px;top:957px;font-size:12.5px;line-height:15px;color:#ececec;">이미지로 시작</div>
<svg style="left:1139px;top:956px" width="16" height="16" viewBox="0 0 16 16"><path d="M1 1 H15 V4 M1 1 V4 M8 1 V15 M5 15 H11" fill="none" stroke="#cfcfcf" stroke-width="2"/></svg>
<svg style="left:1172px;top:955px" width="14" height="17" viewBox="0 0 14 17"><path d="M1 1 H9 L13 5 V16 H1 Z" fill="none" stroke="#cfcfcf" stroke-width="1.2"/><path d="M3 1 V16" stroke="#cfcfcf"/></svg>
<svg style="left:1204px;top:955px" width="18" height="19" viewBox="0 0 18 19"><path d="M1 1 H9 L13 5 V16 H1 Z" fill="none" stroke="#cfcfcf" stroke-width="1.2"/><circle cx="12.5" cy="14" r="4.5" fill="#cfcfcf"/><path d="M12.5 11.5 V16.5 M10 14 H15" stroke="#4a4a4a" stroke-width="1.4"/></svg>
<div style="left:1237px;top:962px;width:3px;height:3px;background:#cfcfcf;border-radius:2px;"></div>
<div style="left:1242px;top:962px;width:3px;height:3px;background:#cfcfcf;border-radius:2px;"></div>
<div style="left:1247px;top:962px;width:3px;height:3px;background:#cfcfcf;border-radius:2px;"></div>
</body></html>
